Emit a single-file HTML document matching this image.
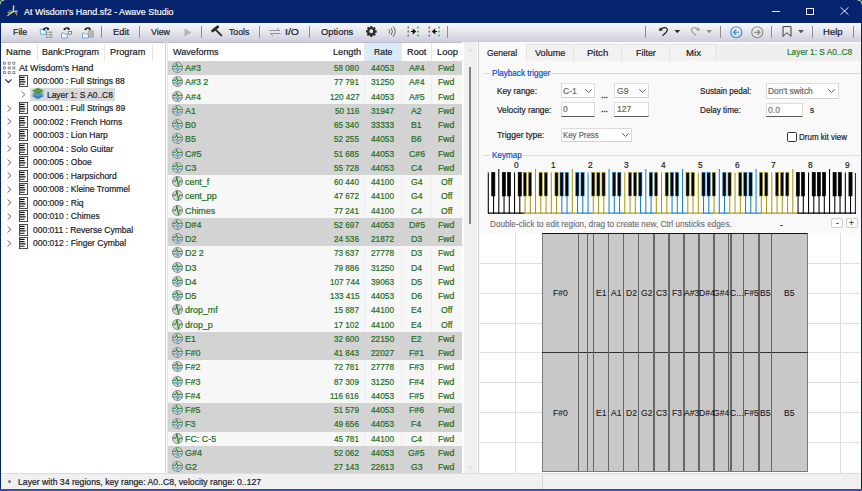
<!DOCTYPE html><html><head><meta charset="utf-8"><style>

*{box-sizing:border-box}
html,body{margin:0;padding:0}
body{width:862px;height:491px;overflow:hidden;position:relative;background:#fff;font-family:"Liberation Sans", sans-serif;font-size:9px}
.a{position:absolute}
.t{position:absolute;white-space:pre}
svg{position:absolute;overflow:visible}

</style></head><body>
<div class="a" style="left:0;top:0;width:862px;height:491px;background:#06236e"></div>
<div class="a" style="left:0;top:0;width:862px;height:23px;background:#06236e"></div>
<svg style="left:0;top:0" width="24" height="23" viewBox="0 0 24 23">
<ellipse cx="10.2" cy="11.2" rx="1.6" ry="1.2" fill="#3a6ae0"/><ellipse cx="16.3" cy="11" rx="1.6" ry="1.2" fill="#3a6ae0"/>
<path d="M13.6 6 L13.3 11.5" stroke="#f2d85a" stroke-width="1.5" stroke-linecap="round"/>
<path d="M7.4 15.8 L12.8 11.8" stroke="#f0d050" stroke-width="1.2"/>
<path d="M7.6 12.6 Q10.5 14.2 13 12 Q15 10.5 17.6 12.2" stroke="#e8d060" stroke-width="1" fill="none"/>
<path d="M15.6 12.3 L16.8 15.3" stroke="#e0c050" stroke-width="1"/>
</svg>
<svg style="left:0;top:0" width="6" height="6" viewBox="0 0 6 6"><path d="M0 0 H4.5 A4.5 4.5 0 0 0 0 4.5z" fill="#2b6a34"/><path d="M4.5 0 A4.5 4.5 0 0 0 0 4.5" stroke="#e8f0e8" stroke-width="0.9" fill="none"/></svg>
<svg style="left:856px;top:0" width="6" height="6" viewBox="0 0 6 6"><path d="M6 0 H1.5 A4.5 4.5 0 0 1 6 4.5z" fill="#2b6a34"/><path d="M1.5 0 A4.5 4.5 0 0 1 6 4.5" stroke="#e8f0e8" stroke-width="0.9" fill="none"/></svg>
<div class="t" style="left:23.50px;top:4.50px;height:14px;line-height:14px;font-size:9px;color:#ffffff;-webkit-text-stroke:0.15px #ffffff;transform:scaleX(0.9932);transform-origin:0 50%;">At Wisdom&#x27;s Hand.sf2 - Awave Studio</div>
<div class="a" style="left:772px;top:11px;width:8px;height:1px;background:#e8ecf8"></div>
<div class="a" style="left:806px;top:7.5px;width:8px;height:7.5px;border:1px solid #e8ecf8"></div>
<svg style="left:840px;top:7px" width="9" height="8" viewBox="0 0 9 8"><path d="M0.5 0.3 L8.5 7.7 M8.5 0.3 L0.5 7.7" stroke="#e8ecf8" stroke-width="1"/></svg>
<div class="a" style="left:0;top:489.4px;width:862px;height:2px;background:#34549f"></div>
<div class="a" style="left:1px;top:23px;width:860px;height:466.4px;background:#fff"></div>
<div class="a" style="left:1px;top:23px;width:860px;height:20.1px;background:linear-gradient(#ffffff,#f2f2f6 12%,#e2e2ea 55%,#cdcddc);border-bottom:1px solid #bcbcc6"></div>
<div class="t" style="left:13.40px;top:26.00px;height:12px;line-height:12px;font-size:9px;color:#1b1b2a;-webkit-text-stroke:0.2px #1b1b2a;transform:scaleX(0.9783);transform-origin:0 50%;">File</div>
<svg style="left:0;top:0" width="862" height="45" viewBox="0 0 862 45"><path d="M40.3 29.3 h2.2 l0.8 0.9 h2.8 v4 h-5.8z" fill="#f4f9fe" stroke="#52a3e6" stroke-width="0.9"/><path d="M43.6 29.6 q2.5 -3.2 5 -0.6" stroke="#111" stroke-width="1.2" fill="none"/><path d="M47.800000000000004 27.3 l1.6 2.4 l-2.4 0.2z" fill="#111"/><circle cx="43.9" cy="29.3" r="1" fill="#111"/><rect x="46.2" y="31.6" width="1.2" height="1.2" fill="#666"/><rect x="48.6" y="31.6" width="3.8" height="1.2" fill="#888"/><rect x="46.2" y="34.1" width="1.2" height="1.2" fill="#666"/><rect x="48.6" y="34.1" width="3.8" height="1.2" fill="#888"/><rect x="46.2" y="36.6" width="1.2" height="1.2" fill="#666"/><rect x="48.6" y="36.6" width="3.8" height="1.2" fill="#888"/><path d="M61.5 33.1 h2.2 l0.8 0.9 h2.8 v4 h-5.8z" fill="#f4f9fe" stroke="#52a3e6" stroke-width="0.9"/><path d="M64.2 29.6 q2.5 -3.2 5 -0.6" stroke="#111" stroke-width="1.2" fill="none"/><path d="M68.4 27.3 l1.6 2.4 l-2.4 0.2z" fill="#111"/><circle cx="64.5" cy="29.3" r="1" fill="#111"/><rect x="68.3" y="31.4" width="3.2" height="2.6" fill="#fff" stroke="#777" stroke-width="0.9"/><path d="M82.5 33.1 h2.2 l0.8 0.9 h2.8 v4 h-5.8z" fill="#f4f9fe" stroke="#52a3e6" stroke-width="0.9"/><path d="M85.2 29.6 q2.5 -3.2 5 -0.6" stroke="#111" stroke-width="1.2" fill="none"/><path d="M89.4 27.3 l1.6 2.4 l-2.4 0.2z" fill="#111"/><circle cx="85.5" cy="29.3" r="1" fill="#111"/><rect x="88.3" y="30.5" width="5.6" height="5.2" fill="#999"/><path d="M88.3 32.2 h5.6 M88.3 34 h5.6 M90.2 30.5 v5.2 M92.1 30.5 v5.2" stroke="#d8d8d8" stroke-width="0.5"/><rect x="88.3" y="36.5" width="1.2" height="1" fill="#666"/><rect x="90.3" y="36.5" width="3.6" height="1" fill="#888"/></svg>
<div class="a" style="left:101.0px;top:25.5px;width:1px;height:12px;background:#8c8c96"></div>
<div class="t" style="left:112.50px;top:26.00px;height:12px;line-height:12px;font-size:9px;color:#1b1b2a;-webkit-text-stroke:0.2px #1b1b2a;transform:scaleX(1.0377);transform-origin:0 50%;">Edit</div>
<div class="a" style="left:139.2px;top:25.5px;width:1px;height:12px;background:#8c8c96"></div>
<div class="t" style="left:150.50px;top:26.00px;height:12px;line-height:12px;font-size:9px;color:#1b1b2a;-webkit-text-stroke:0.2px #1b1b2a;transform:scaleX(0.9814);transform-origin:0 50%;">View</div>
<svg style="left:184px;top:28px" width="8" height="9" viewBox="0 0 8 9"><path d="M0.5 0.5 L7.5 4.5 L0.5 8.5z" fill="#b4b4bc"/></svg>
<div class="a" style="left:200.8px;top:25.5px;width:1px;height:12px;background:#8c8c96"></div>
<svg style="left:0;top:0" width="862" height="45" viewBox="0 0 862 45">
<path d="M212.6 30.9 L217.7 26.8" stroke="#2a2a2a" stroke-width="2.8" stroke-linecap="round"/>
<path d="M215.6 29.6 L221.3 35.4" stroke="#2a2a2a" stroke-width="1.9" stroke-linecap="round"/></svg>
<div class="t" style="left:228.80px;top:26.00px;height:12px;line-height:12px;font-size:9px;color:#1b1b2a;-webkit-text-stroke:0.2px #1b1b2a;transform:scaleX(0.9659);transform-origin:0 50%;">Tools</div>
<div class="a" style="left:259.0px;top:25.5px;width:1px;height:12px;background:#8c8c96"></div>
<svg style="left:269px;top:27px" width="12" height="10" viewBox="0 0 12 10">
<path d="M0.5 3.5 H10.5 L8 1 M11.5 6.5 H1.5 L4 9" stroke="#888" stroke-width="0.9" fill="none"/></svg>
<div class="t" style="left:285.40px;top:26.00px;height:12px;line-height:12px;font-size:9px;color:#1b1b2a;-webkit-text-stroke:0.2px #1b1b2a;transform:scaleX(1.1568);transform-origin:0 50%;">I/O</div>
<div class="a" style="left:308.9px;top:25.5px;width:1px;height:12px;background:#8c8c96"></div>
<div class="t" style="left:320.80px;top:26.00px;height:12px;line-height:12px;font-size:9px;color:#1b1b2a;-webkit-text-stroke:0.2px #1b1b2a;transform:scaleX(1.0409);transform-origin:0 50%;">Options</div>
<svg style="left:365.5px;top:26.3px" width="10.5" height="10.5" viewBox="0 0 20 20">
<path fill="#2d2d2d" d="M8.3 0h3.4l.5 2.6 1.8.8 2.2-1.5 2.4 2.4-1.5 2.2.8 1.8 2.6.5v3.4l-2.6.5-.8 1.8 1.5 2.2-2.4 2.4-2.2-1.5-1.8.8-.5 2.6H8.3l-.5-2.6-1.8-.8-2.2 1.5-2.4-2.4 1.5-2.2-.8-1.8L0 11.7V8.3l2.6-.5.8-1.8-1.5-2.2 2.4-2.4 2.2 1.5 1.8-.8z M10 6.3a3.7 3.7 0 1 0 0 7.4a3.7 3.7 0 1 0 0-7.4z"/></svg>
<svg style="left:388px;top:26px" width="8" height="11" viewBox="0 0 8 11">
<path d="M1 3.5 q1.5 2 0 4" stroke="#555" stroke-width="0.9" fill="none"/><path d="M3 2 q3 3.5 0 7" stroke="#555" stroke-width="0.9" fill="none"/><path d="M5 0.5 q4.5 5 0 10" stroke="#555" stroke-width="0.9" fill="none"/></svg>
<svg style="left:406.8px;top:26px" width="13" height="11" viewBox="0 0 13 11">
<rect x="0.5" y="0.5" width="1.6" height="2" fill="#777"/><rect x="0.5" y="4.5" width="1.6" height="2" fill="#777"/><rect x="0.5" y="8.5" width="1.6" height="2" fill="#777"/>
<circle cx="11" cy="1.5" r="1" fill="#5aa85a"/><circle cx="11" cy="5.5" r="1" fill="#5aa85a"/><circle cx="11" cy="9.5" r="1" fill="#5aa85a"/>
<path d="M4 5.5 h4 M6.3 3.8 L8.3 5.5 L6.3 7.2z" stroke="#111" stroke-width="1.2" fill="#111"/></svg>
<svg style="left:427.7px;top:26px" width="13" height="11" viewBox="0 0 13 11">
<rect x="0.5" y="0.5" width="1.6" height="2" fill="#777"/><rect x="0.5" y="4.5" width="1.6" height="2" fill="#777"/><rect x="0.5" y="8.5" width="1.6" height="2" fill="#777"/>
<circle cx="11" cy="1.5" r="1" fill="#5aa85a"/><circle cx="11" cy="5.5" r="1" fill="#5aa85a"/><circle cx="11" cy="9.5" r="1" fill="#5aa85a"/>
<path d="M5 5.5 h4 M6.7 3.8 L4.7 5.5 L6.7 7.2z" stroke="#111" stroke-width="1.2" fill="#111"/></svg>
<div class="a" style="left:447.0px;top:25.5px;width:1px;height:12px;background:#8c8c96"></div>
<div class="a" style="left:645.2px;top:25.5px;width:1px;height:12px;background:#8c8c96"></div>
<svg style="left:0;top:0" width="862" height="45" viewBox="0 0 862 45">
<path d="M660.6 30.2 C661.8 27.2 667.2 26.6 667.3 29.8 C667.4 32.2 664.4 34.2 662.4 35.6" stroke="#222" stroke-width="1.25" fill="none"/>
<path d="M658.8 31 L659.9 27.4 L663 30.2z" fill="#222"/>
<path d="M674.4 30 H680.2 L677.3 33.2z" fill="#2a2a2a"/>
<path d="M698.2 30.2 C697 27.2 691.6 26.6 691.5 29.8 C691.4 32.2 694.4 34.2 696.4 35.6" stroke="#a4a4a4" stroke-width="1.25" fill="none"/>
<path d="M700 31 L698.9 27.4 L695.8 30.2z" fill="#a4a4a4"/>
<path d="M706.2 30 H712 L709.1 33.2z" fill="#8c8c8c"/>
</svg>
<div class="a" style="left:719.8px;top:25.5px;width:1px;height:12px;background:#8c8c96"></div>
<svg style="left:729.5px;top:25.8px" width="12.5" height="12.5" viewBox="0 0 12 12">
<circle cx="6" cy="6" r="5.3" stroke="#3a8fdc" stroke-width="1.1" fill="none"/><path d="M8.8 6 H3.5 M5.8 3.6 L3.3 6 L5.8 8.4" stroke="#3a8fdc" stroke-width="1.1" fill="none"/></svg>
<svg style="left:750.5px;top:25.8px" width="12.5" height="12.5" viewBox="0 0 12 12">
<circle cx="6" cy="6" r="5.3" stroke="#8a8a8a" stroke-width="1.1" fill="none"/><path d="M3.2 6 H8.5 M6.2 3.6 L8.7 6 L6.2 8.4" stroke="#8a8a8a" stroke-width="1.2" fill="none"/></svg>
<div class="a" style="left:770.8px;top:25.5px;width:1px;height:12px;background:#8c8c96"></div>
<svg style="left:782px;top:26px" width="10" height="11" viewBox="0 0 10 11">
<path d="M1 0.6 H9 V10.4 L5 6.8 L1 10.4z" stroke="#3c3c3c" stroke-width="1" fill="none"/></svg>
<svg style="left:798.2px;top:30px" width="7" height="4" viewBox="0 0 7 4"><path d="M0 0 H6 L3 3.2z" fill="#555"/></svg>
<div class="a" style="left:811.5px;top:25.5px;width:1px;height:12px;background:#8c8c96"></div>
<div class="t" style="left:823.40px;top:26.00px;height:12px;line-height:12px;font-size:9px;color:#1b1b2a;-webkit-text-stroke:0.2px #1b1b2a;transform:scaleX(1.0586);transform-origin:0 50%;">Help</div>
<div class="a" style="left:853.3px;top:25.5px;width:1px;height:12px;background:#8c8c96"></div>
<div class="t" style="left:5.50px;top:46.00px;height:12px;line-height:12px;font-size:9px;color:#1b1b2a;-webkit-text-stroke:0.2px #1b1b2a;transform:scaleX(1.0368);transform-origin:0 50%;">Name</div>
<div class="t" style="left:42.40px;top:46.00px;height:12px;line-height:12px;font-size:9px;color:#1b1b2a;-webkit-text-stroke:0.2px #1b1b2a;transform:scaleX(0.9908);transform-origin:0 50%;">Bank:Program</div>
<div class="t" style="left:109.50px;top:46.00px;height:12px;line-height:12px;font-size:9px;color:#1b1b2a;-webkit-text-stroke:0.2px #1b1b2a;transform:scaleX(1.0227);transform-origin:0 50%;">Program</div>
<div class="a" style="left:37.0px;top:43.5px;width:1px;height:17px;background:#e6e6e6"></div>
<div class="a" style="left:104.0px;top:43.5px;width:1px;height:17px;background:#e6e6e6"></div>
<div class="a" style="left:151.9px;top:43.5px;width:1px;height:17px;background:#e6e6e6"></div>
<div class="a" style="left:165px;top:42px;width:1px;height:431px;background:#d2d2d2"></div>
<div class="a" style="left:167px;top:42px;width:1px;height:431px;background:#e4e4e4"></div>
<svg style="left:0;top:0" width="20" height="80" viewBox="0 0 20 80"><rect x="3.5" y="62.2" width="2" height="2" fill="#fff" stroke="#777" stroke-width="0.8"/><rect x="3.5" y="66.9" width="2" height="2" fill="#fff" stroke="#777" stroke-width="0.8"/><rect x="3.5" y="71.6" width="2" height="2" fill="#fff" stroke="#777" stroke-width="0.8"/><rect x="8.2" y="62.2" width="2" height="2" fill="#fff" stroke="#777" stroke-width="0.8"/><rect x="8.2" y="66.9" width="2" height="2" fill="#fff" stroke="#777" stroke-width="0.8"/><rect x="8.2" y="71.6" width="2" height="2" fill="#fff" stroke="#777" stroke-width="0.8"/><rect x="12.9" y="62.2" width="2" height="2" fill="#fff" stroke="#777" stroke-width="0.8"/><rect x="12.9" y="66.9" width="2" height="2" fill="#fff" stroke="#777" stroke-width="0.8"/><rect x="12.9" y="71.6" width="2" height="2" fill="#fff" stroke="#777" stroke-width="0.8"/></svg>
<div class="t" style="left:19.10px;top:61.75px;height:12px;line-height:12px;font-size:9px;color:#1b1b2a;-webkit-text-stroke:0.2px #1b1b2a;transform:scaleX(1.0088);transform-origin:0 50%;">At Wisdom&#x27;s Hand</div>
<svg style="left:5.3px;top:79.25px" width="7" height="4" viewBox="0 0 7 4"><path d="M0.4 0.4 L3.5 3.4 L6.6 0.4" stroke="#222" stroke-width="1.1" fill="none"/></svg>
<svg style="left:19.2px;top:75.45px" width="9" height="12" viewBox="0 0 9 12">
<rect x="0.45" y="0.45" width="8.1" height="11.1" fill="#fff" stroke="#3a3a3a" stroke-width="0.9"/>
<path d="M1 2.3 h4.6 M1 4.6 h4.6 M1 6.9 h5.6 M1 9.2 h4.6" stroke="#111" stroke-width="1.15"/></svg>
<div class="t" style="left:33.10px;top:75.25px;height:12px;line-height:12px;font-size:9px;color:#1b1b2a;-webkit-text-stroke:0.2px #1b1b2a;transform:scaleX(0.9389);transform-origin:0 50%;">000:000 : Full Strings 88</div>
<div class="a" style="left:30px;top:88.25px;width:84.5px;height:13px;background:#d9d9d9"></div>
<svg style="left:20.9px;top:91.45px" width="5" height="7" viewBox="0 0 5 7"><path d="M0.6 0.5 L4 3.5 L0.6 6.5" stroke="#777" stroke-width="1" fill="none"/></svg>
<svg style="left:32px;top:88.45px" width="12" height="11" viewBox="0 0 12 11">
<path d="M6 5.2 L11.5 8 L6 11 L0.5 8z" fill="#3d82c9" stroke="#2f6fb5" stroke-width="0.5"/>
<path d="M6 3 L11.5 5.8 L6 8.8 L0.5 5.8z" fill="#55a0b8" stroke="#3f8aa5" stroke-width="0.5"/>
<path d="M6 0 L11.5 2.8 L6 5.8 L0.5 2.8z" fill="#5a9a50" stroke="#3f7f3f" stroke-width="0.5"/></svg>
<div class="t" style="left:47.30px;top:88.75px;height:12px;line-height:12px;font-size:9px;color:#1b1b2a;-webkit-text-stroke:0.2px #1b1b2a;transform:scaleX(0.9327);transform-origin:0 50%;">Layer 1: S A0..C8</div>
<svg style="left:6.5px;top:104.95px" width="5" height="7" viewBox="0 0 5 7"><path d="M0.6 0.5 L4 3.5 L0.6 6.5" stroke="#666" stroke-width="1" fill="none"/></svg>
<svg style="left:19.2px;top:102.45px" width="9" height="12" viewBox="0 0 9 12">
<rect x="0.45" y="0.45" width="8.1" height="11.1" fill="#fff" stroke="#3a3a3a" stroke-width="0.9"/>
<path d="M1 2.3 h4.6 M1 4.6 h4.6 M1 6.9 h5.6 M1 9.2 h4.6" stroke="#111" stroke-width="1.15"/></svg>
<div class="t" style="left:33.10px;top:102.25px;height:12px;line-height:12px;font-size:9px;color:#1b1b2a;-webkit-text-stroke:0.2px #1b1b2a;transform:scaleX(0.9450);transform-origin:0 50%;">000:001 : Full Strings 89</div>
<svg style="left:6.5px;top:118.45px" width="5" height="7" viewBox="0 0 5 7"><path d="M0.6 0.5 L4 3.5 L0.6 6.5" stroke="#666" stroke-width="1" fill="none"/></svg>
<svg style="left:19.2px;top:115.95px" width="9" height="12" viewBox="0 0 9 12">
<rect x="0.45" y="0.45" width="8.1" height="11.1" fill="#fff" stroke="#3a3a3a" stroke-width="0.9"/>
<path d="M1 2.3 h4.6 M1 4.6 h4.6 M1 6.9 h5.6 M1 9.2 h4.6" stroke="#111" stroke-width="1.15"/></svg>
<div class="t" style="left:33.10px;top:115.75px;height:12px;line-height:12px;font-size:9px;color:#1b1b2a;-webkit-text-stroke:0.2px #1b1b2a;transform:scaleX(0.9450);transform-origin:0 50%;">000:002 : French Horns</div>
<svg style="left:6.5px;top:131.95px" width="5" height="7" viewBox="0 0 5 7"><path d="M0.6 0.5 L4 3.5 L0.6 6.5" stroke="#666" stroke-width="1" fill="none"/></svg>
<svg style="left:19.2px;top:129.45px" width="9" height="12" viewBox="0 0 9 12">
<rect x="0.45" y="0.45" width="8.1" height="11.1" fill="#fff" stroke="#3a3a3a" stroke-width="0.9"/>
<path d="M1 2.3 h4.6 M1 4.6 h4.6 M1 6.9 h5.6 M1 9.2 h4.6" stroke="#111" stroke-width="1.15"/></svg>
<div class="t" style="left:33.10px;top:129.25px;height:12px;line-height:12px;font-size:9px;color:#1b1b2a;-webkit-text-stroke:0.2px #1b1b2a;transform:scaleX(0.9450);transform-origin:0 50%;">000:003 : Lion Harp</div>
<svg style="left:6.5px;top:145.45px" width="5" height="7" viewBox="0 0 5 7"><path d="M0.6 0.5 L4 3.5 L0.6 6.5" stroke="#666" stroke-width="1" fill="none"/></svg>
<svg style="left:19.2px;top:142.95px" width="9" height="12" viewBox="0 0 9 12">
<rect x="0.45" y="0.45" width="8.1" height="11.1" fill="#fff" stroke="#3a3a3a" stroke-width="0.9"/>
<path d="M1 2.3 h4.6 M1 4.6 h4.6 M1 6.9 h5.6 M1 9.2 h4.6" stroke="#111" stroke-width="1.15"/></svg>
<div class="t" style="left:33.10px;top:142.75px;height:12px;line-height:12px;font-size:9px;color:#1b1b2a;-webkit-text-stroke:0.2px #1b1b2a;transform:scaleX(0.9450);transform-origin:0 50%;">000:004 : Solo Guitar</div>
<svg style="left:6.5px;top:158.95px" width="5" height="7" viewBox="0 0 5 7"><path d="M0.6 0.5 L4 3.5 L0.6 6.5" stroke="#666" stroke-width="1" fill="none"/></svg>
<svg style="left:19.2px;top:156.45px" width="9" height="12" viewBox="0 0 9 12">
<rect x="0.45" y="0.45" width="8.1" height="11.1" fill="#fff" stroke="#3a3a3a" stroke-width="0.9"/>
<path d="M1 2.3 h4.6 M1 4.6 h4.6 M1 6.9 h5.6 M1 9.2 h4.6" stroke="#111" stroke-width="1.15"/></svg>
<div class="t" style="left:33.10px;top:156.25px;height:12px;line-height:12px;font-size:9px;color:#1b1b2a;-webkit-text-stroke:0.2px #1b1b2a;transform:scaleX(0.9450);transform-origin:0 50%;">000:005 : Oboe</div>
<svg style="left:6.5px;top:172.45px" width="5" height="7" viewBox="0 0 5 7"><path d="M0.6 0.5 L4 3.5 L0.6 6.5" stroke="#666" stroke-width="1" fill="none"/></svg>
<svg style="left:19.2px;top:169.95px" width="9" height="12" viewBox="0 0 9 12">
<rect x="0.45" y="0.45" width="8.1" height="11.1" fill="#fff" stroke="#3a3a3a" stroke-width="0.9"/>
<path d="M1 2.3 h4.6 M1 4.6 h4.6 M1 6.9 h5.6 M1 9.2 h4.6" stroke="#111" stroke-width="1.15"/></svg>
<div class="t" style="left:33.10px;top:169.75px;height:12px;line-height:12px;font-size:9px;color:#1b1b2a;-webkit-text-stroke:0.2px #1b1b2a;transform:scaleX(0.9450);transform-origin:0 50%;">000:006 : Harpsichord</div>
<svg style="left:6.5px;top:185.95px" width="5" height="7" viewBox="0 0 5 7"><path d="M0.6 0.5 L4 3.5 L0.6 6.5" stroke="#666" stroke-width="1" fill="none"/></svg>
<svg style="left:19.2px;top:183.45px" width="9" height="12" viewBox="0 0 9 12">
<rect x="0.45" y="0.45" width="8.1" height="11.1" fill="#fff" stroke="#3a3a3a" stroke-width="0.9"/>
<path d="M1 2.3 h4.6 M1 4.6 h4.6 M1 6.9 h5.6 M1 9.2 h4.6" stroke="#111" stroke-width="1.15"/></svg>
<div class="t" style="left:33.10px;top:183.25px;height:12px;line-height:12px;font-size:9px;color:#1b1b2a;-webkit-text-stroke:0.2px #1b1b2a;transform:scaleX(0.9450);transform-origin:0 50%;">000:008 : Kleine Trommel</div>
<svg style="left:6.5px;top:199.45px" width="5" height="7" viewBox="0 0 5 7"><path d="M0.6 0.5 L4 3.5 L0.6 6.5" stroke="#666" stroke-width="1" fill="none"/></svg>
<svg style="left:19.2px;top:196.95px" width="9" height="12" viewBox="0 0 9 12">
<rect x="0.45" y="0.45" width="8.1" height="11.1" fill="#fff" stroke="#3a3a3a" stroke-width="0.9"/>
<path d="M1 2.3 h4.6 M1 4.6 h4.6 M1 6.9 h5.6 M1 9.2 h4.6" stroke="#111" stroke-width="1.15"/></svg>
<div class="t" style="left:33.10px;top:196.75px;height:12px;line-height:12px;font-size:9px;color:#1b1b2a;-webkit-text-stroke:0.2px #1b1b2a;transform:scaleX(0.9450);transform-origin:0 50%;">000:009 : Riq</div>
<svg style="left:6.5px;top:212.95px" width="5" height="7" viewBox="0 0 5 7"><path d="M0.6 0.5 L4 3.5 L0.6 6.5" stroke="#666" stroke-width="1" fill="none"/></svg>
<svg style="left:19.2px;top:210.45px" width="9" height="12" viewBox="0 0 9 12">
<rect x="0.45" y="0.45" width="8.1" height="11.1" fill="#fff" stroke="#3a3a3a" stroke-width="0.9"/>
<path d="M1 2.3 h4.6 M1 4.6 h4.6 M1 6.9 h5.6 M1 9.2 h4.6" stroke="#111" stroke-width="1.15"/></svg>
<div class="t" style="left:33.10px;top:210.25px;height:12px;line-height:12px;font-size:9px;color:#1b1b2a;-webkit-text-stroke:0.2px #1b1b2a;transform:scaleX(0.9450);transform-origin:0 50%;">000:010 : Chimes</div>
<svg style="left:6.5px;top:226.45px" width="5" height="7" viewBox="0 0 5 7"><path d="M0.6 0.5 L4 3.5 L0.6 6.5" stroke="#666" stroke-width="1" fill="none"/></svg>
<svg style="left:19.2px;top:223.95px" width="9" height="12" viewBox="0 0 9 12">
<rect x="0.45" y="0.45" width="8.1" height="11.1" fill="#fff" stroke="#3a3a3a" stroke-width="0.9"/>
<path d="M1 2.3 h4.6 M1 4.6 h4.6 M1 6.9 h5.6 M1 9.2 h4.6" stroke="#111" stroke-width="1.15"/></svg>
<div class="t" style="left:33.10px;top:223.75px;height:12px;line-height:12px;font-size:9px;color:#1b1b2a;-webkit-text-stroke:0.2px #1b1b2a;transform:scaleX(0.9450);transform-origin:0 50%;">000:011 : Reverse Cymbal</div>
<svg style="left:6.5px;top:239.95px" width="5" height="7" viewBox="0 0 5 7"><path d="M0.6 0.5 L4 3.5 L0.6 6.5" stroke="#666" stroke-width="1" fill="none"/></svg>
<svg style="left:19.2px;top:237.45px" width="9" height="12" viewBox="0 0 9 12">
<rect x="0.45" y="0.45" width="8.1" height="11.1" fill="#fff" stroke="#3a3a3a" stroke-width="0.9"/>
<path d="M1 2.3 h4.6 M1 4.6 h4.6 M1 6.9 h5.6 M1 9.2 h4.6" stroke="#111" stroke-width="1.15"/></svg>
<div class="t" style="left:33.10px;top:237.25px;height:12px;line-height:12px;font-size:9px;color:#1b1b2a;-webkit-text-stroke:0.2px #1b1b2a;transform:scaleX(0.9450);transform-origin:0 50%;">000:012 : Finger Cymbal</div>
<div class="t" style="left:172.60px;top:46.00px;height:12px;line-height:12px;font-size:9px;color:#1b1b2a;-webkit-text-stroke:0.2px #1b1b2a;transform:scaleX(1.0095);transform-origin:0 50%;">Waveforms</div>
<div class="a" style="left:364.2px;top:42.8px;width:37.6px;height:18.3px;background:#d9ebf9"></div>
<div class="t" style="left:332.60px;top:46.00px;height:12px;line-height:12px;font-size:9px;color:#1b1b2a;-webkit-text-stroke:0.2px #1b1b2a;transform:scaleX(1.0207);transform-origin:0 50%;">Length</div>
<div class="t" style="left:374.40px;top:46.00px;height:12px;line-height:12px;font-size:9px;color:#1b1b2a;-webkit-text-stroke:0.2px #1b1b2a;transform:scaleX(0.9676);transform-origin:0 50%;">Rate</div>
<div class="t" style="left:407.20px;top:46.00px;height:12px;line-height:12px;font-size:9px;color:#1b1b2a;-webkit-text-stroke:0.2px #1b1b2a;transform:scaleX(1.0202);transform-origin:0 50%;">Root</div>
<div class="t" style="left:436.90px;top:46.00px;height:12px;line-height:12px;font-size:9px;color:#1b1b2a;-webkit-text-stroke:0.2px #1b1b2a;transform:scaleX(1.0434);transform-origin:0 50%;">Loop</div>
<div class="a" style="left:363.7px;top:43px;width:1px;height:17.5px;background:#e8e8e8"></div>
<div class="a" style="left:401.2px;top:43px;width:1px;height:17.5px;background:#e8e8e8"></div>
<div class="a" style="left:430.9px;top:43px;width:1px;height:17.5px;background:#e8e8e8"></div>
<div class="a" style="left:168px;top:61px;width:294px;height:412px;overflow:hidden">
<div class="a" style="left:0;top:0.00px;width:294px;height:14.25px;background:#d3d3d3"></div>
<div class="a" style="left:0;top:14.25px;width:294px;height:14.25px;background:#f7f7f7"></div>
<div class="a" style="left:195.70px;top:14.25px;width:1px;height:14.25px;background:#e6eef6"></div>
<div class="a" style="left:233.20px;top:14.25px;width:1px;height:14.25px;background:#e6eef6"></div>
<div class="a" style="left:262.90px;top:14.25px;width:1px;height:14.25px;background:#e6eef6"></div>
<div class="a" style="left:0;top:28.50px;width:294px;height:14.25px;background:#f7f7f7"></div>
<div class="a" style="left:195.70px;top:28.50px;width:1px;height:14.25px;background:#e6eef6"></div>
<div class="a" style="left:233.20px;top:28.50px;width:1px;height:14.25px;background:#e6eef6"></div>
<div class="a" style="left:262.90px;top:28.50px;width:1px;height:14.25px;background:#e6eef6"></div>
<div class="a" style="left:0;top:42.75px;width:294px;height:14.25px;background:#d3d3d3"></div>
<div class="a" style="left:0;top:57.00px;width:294px;height:14.25px;background:#d3d3d3"></div>
<div class="a" style="left:0;top:71.25px;width:294px;height:14.25px;background:#d3d3d3"></div>
<div class="a" style="left:0;top:85.50px;width:294px;height:14.25px;background:#d3d3d3"></div>
<div class="a" style="left:0;top:99.75px;width:294px;height:14.25px;background:#d3d3d3"></div>
<div class="a" style="left:0;top:114.00px;width:294px;height:14.25px;background:#f7f7f7"></div>
<div class="a" style="left:195.70px;top:114.00px;width:1px;height:14.25px;background:#e6eef6"></div>
<div class="a" style="left:233.20px;top:114.00px;width:1px;height:14.25px;background:#e6eef6"></div>
<div class="a" style="left:262.90px;top:114.00px;width:1px;height:14.25px;background:#e6eef6"></div>
<div class="a" style="left:0;top:128.25px;width:294px;height:14.25px;background:#f7f7f7"></div>
<div class="a" style="left:195.70px;top:128.25px;width:1px;height:14.25px;background:#e6eef6"></div>
<div class="a" style="left:233.20px;top:128.25px;width:1px;height:14.25px;background:#e6eef6"></div>
<div class="a" style="left:262.90px;top:128.25px;width:1px;height:14.25px;background:#e6eef6"></div>
<div class="a" style="left:0;top:142.50px;width:294px;height:14.25px;background:#f7f7f7"></div>
<div class="a" style="left:195.70px;top:142.50px;width:1px;height:14.25px;background:#e6eef6"></div>
<div class="a" style="left:233.20px;top:142.50px;width:1px;height:14.25px;background:#e6eef6"></div>
<div class="a" style="left:262.90px;top:142.50px;width:1px;height:14.25px;background:#e6eef6"></div>
<div class="a" style="left:0;top:156.75px;width:294px;height:14.25px;background:#d3d3d3"></div>
<div class="a" style="left:0;top:171.00px;width:294px;height:14.25px;background:#d3d3d3"></div>
<div class="a" style="left:0;top:185.25px;width:294px;height:14.25px;background:#f7f7f7"></div>
<div class="a" style="left:195.70px;top:185.25px;width:1px;height:14.25px;background:#e6eef6"></div>
<div class="a" style="left:233.20px;top:185.25px;width:1px;height:14.25px;background:#e6eef6"></div>
<div class="a" style="left:262.90px;top:185.25px;width:1px;height:14.25px;background:#e6eef6"></div>
<div class="a" style="left:0;top:199.50px;width:294px;height:14.25px;background:#f7f7f7"></div>
<div class="a" style="left:195.70px;top:199.50px;width:1px;height:14.25px;background:#e6eef6"></div>
<div class="a" style="left:233.20px;top:199.50px;width:1px;height:14.25px;background:#e6eef6"></div>
<div class="a" style="left:262.90px;top:199.50px;width:1px;height:14.25px;background:#e6eef6"></div>
<div class="a" style="left:0;top:213.75px;width:294px;height:14.25px;background:#f7f7f7"></div>
<div class="a" style="left:195.70px;top:213.75px;width:1px;height:14.25px;background:#e6eef6"></div>
<div class="a" style="left:233.20px;top:213.75px;width:1px;height:14.25px;background:#e6eef6"></div>
<div class="a" style="left:262.90px;top:213.75px;width:1px;height:14.25px;background:#e6eef6"></div>
<div class="a" style="left:0;top:228.00px;width:294px;height:14.25px;background:#f7f7f7"></div>
<div class="a" style="left:195.70px;top:228.00px;width:1px;height:14.25px;background:#e6eef6"></div>
<div class="a" style="left:233.20px;top:228.00px;width:1px;height:14.25px;background:#e6eef6"></div>
<div class="a" style="left:262.90px;top:228.00px;width:1px;height:14.25px;background:#e6eef6"></div>
<div class="a" style="left:0;top:242.25px;width:294px;height:14.25px;background:#f7f7f7"></div>
<div class="a" style="left:195.70px;top:242.25px;width:1px;height:14.25px;background:#e6eef6"></div>
<div class="a" style="left:233.20px;top:242.25px;width:1px;height:14.25px;background:#e6eef6"></div>
<div class="a" style="left:262.90px;top:242.25px;width:1px;height:14.25px;background:#e6eef6"></div>
<div class="a" style="left:0;top:256.50px;width:294px;height:14.25px;background:#f7f7f7"></div>
<div class="a" style="left:195.70px;top:256.50px;width:1px;height:14.25px;background:#e6eef6"></div>
<div class="a" style="left:233.20px;top:256.50px;width:1px;height:14.25px;background:#e6eef6"></div>
<div class="a" style="left:262.90px;top:256.50px;width:1px;height:14.25px;background:#e6eef6"></div>
<div class="a" style="left:0;top:270.75px;width:294px;height:14.25px;background:#d3d3d3"></div>
<div class="a" style="left:0;top:285.00px;width:294px;height:14.25px;background:#d3d3d3"></div>
<div class="a" style="left:0;top:299.25px;width:294px;height:14.25px;background:#f7f7f7"></div>
<div class="a" style="left:195.70px;top:299.25px;width:1px;height:14.25px;background:#e6eef6"></div>
<div class="a" style="left:233.20px;top:299.25px;width:1px;height:14.25px;background:#e6eef6"></div>
<div class="a" style="left:262.90px;top:299.25px;width:1px;height:14.25px;background:#e6eef6"></div>
<div class="a" style="left:0;top:313.50px;width:294px;height:14.25px;background:#f7f7f7"></div>
<div class="a" style="left:195.70px;top:313.50px;width:1px;height:14.25px;background:#e6eef6"></div>
<div class="a" style="left:233.20px;top:313.50px;width:1px;height:14.25px;background:#e6eef6"></div>
<div class="a" style="left:262.90px;top:313.50px;width:1px;height:14.25px;background:#e6eef6"></div>
<div class="a" style="left:0;top:327.75px;width:294px;height:14.25px;background:#f7f7f7"></div>
<div class="a" style="left:195.70px;top:327.75px;width:1px;height:14.25px;background:#e6eef6"></div>
<div class="a" style="left:233.20px;top:327.75px;width:1px;height:14.25px;background:#e6eef6"></div>
<div class="a" style="left:262.90px;top:327.75px;width:1px;height:14.25px;background:#e6eef6"></div>
<div class="a" style="left:0;top:342.00px;width:294px;height:14.25px;background:#d3d3d3"></div>
<div class="a" style="left:0;top:356.25px;width:294px;height:14.25px;background:#d3d3d3"></div>
<div class="a" style="left:0;top:370.50px;width:294px;height:14.25px;background:#f7f7f7"></div>
<div class="a" style="left:195.70px;top:370.50px;width:1px;height:14.25px;background:#e6eef6"></div>
<div class="a" style="left:233.20px;top:370.50px;width:1px;height:14.25px;background:#e6eef6"></div>
<div class="a" style="left:262.90px;top:370.50px;width:1px;height:14.25px;background:#e6eef6"></div>
<div class="a" style="left:0;top:384.75px;width:294px;height:14.25px;background:#d3d3d3"></div>
<div class="a" style="left:0;top:399.00px;width:294px;height:14.25px;background:#d3d3d3"></div>
</div>
<svg style="left:171.5px;top:62.02px" width="11" height="11" viewBox="0 0 11 11">
<circle cx="5.5" cy="5.5" r="5.05" fill="#d6d6d6" stroke="#7c7c7c" stroke-width="0.85"/>
<path d="M0.6 4.3 H3.7 L4.7 1.6 L5.8 5.6 L6.5 4.3 H10.4" stroke="#228a22" stroke-width="1" fill="none"/>
<path d="M0.6 6.9 H3.7 L4.6 6.1 L5.6 9.4 L6.6 6.9 H10.4" stroke="#3a8db5" stroke-width="1" fill="none"/></svg>
<div class="t" style="left:185.00px;top:62.12px;height:12px;line-height:12px;font-size:9px;color:#1c6e1c;-webkit-text-stroke:0.2px #1c6e1c;transform:scaleX(0.9900);transform-origin:0 50%;">A#3</div>
<div class="t" style="left:334.08px;top:62.12px;height:12px;line-height:12px;font-size:9px;color:#1c6e1c;-webkit-text-stroke:0.2px #1c6e1c;transform:scaleX(0.9050);transform-origin:0 50%;">58 080</div>
<div class="t" style="left:371.44px;top:62.12px;height:12px;line-height:12px;font-size:9px;color:#1c6e1c;-webkit-text-stroke:0.2px #1c6e1c;transform:scaleX(0.9200);transform-origin:0 50%;">44053</div>
<div class="t" style="left:408.78px;top:62.12px;height:12px;line-height:12px;font-size:9px;color:#1c6e1c;-webkit-text-stroke:0.2px #1c6e1c;transform:scaleX(0.9700);transform-origin:0 50%;">A#4</div>
<div class="t" style="left:438.44px;top:62.12px;height:12px;line-height:12px;font-size:9px;color:#1c6e1c;-webkit-text-stroke:0.2px #1c6e1c;transform:scaleX(0.9650);transform-origin:0 50%;">Fwd</div>
<svg style="left:171.5px;top:76.28px" width="11" height="11" viewBox="0 0 11 11">
<circle cx="5.5" cy="5.5" r="5.05" fill="#d6d6d6" stroke="#7c7c7c" stroke-width="0.85"/>
<path d="M0.6 4.3 H3.7 L4.7 1.6 L5.8 5.6 L6.5 4.3 H10.4" stroke="#228a22" stroke-width="1" fill="none"/>
<path d="M0.6 6.9 H3.7 L4.6 6.1 L5.6 9.4 L6.6 6.9 H10.4" stroke="#3a8db5" stroke-width="1" fill="none"/></svg>
<div class="t" style="left:185.00px;top:76.38px;height:12px;line-height:12px;font-size:9px;color:#1c6e1c;-webkit-text-stroke:0.2px #1c6e1c;transform:scaleX(0.9900);transform-origin:0 50%;">A#3 2</div>
<div class="t" style="left:334.08px;top:76.38px;height:12px;line-height:12px;font-size:9px;color:#1c6e1c;-webkit-text-stroke:0.2px #1c6e1c;transform:scaleX(0.9050);transform-origin:0 50%;">77 791</div>
<div class="t" style="left:371.44px;top:76.38px;height:12px;line-height:12px;font-size:9px;color:#1c6e1c;-webkit-text-stroke:0.2px #1c6e1c;transform:scaleX(0.9200);transform-origin:0 50%;">31250</div>
<div class="t" style="left:408.78px;top:76.38px;height:12px;line-height:12px;font-size:9px;color:#1c6e1c;-webkit-text-stroke:0.2px #1c6e1c;transform:scaleX(0.9700);transform-origin:0 50%;">A#4</div>
<div class="t" style="left:438.44px;top:76.38px;height:12px;line-height:12px;font-size:9px;color:#1c6e1c;-webkit-text-stroke:0.2px #1c6e1c;transform:scaleX(0.9650);transform-origin:0 50%;">Fwd</div>
<svg style="left:171.5px;top:90.53px" width="11" height="11" viewBox="0 0 11 11">
<circle cx="5.5" cy="5.5" r="5.05" fill="#d6d6d6" stroke="#7c7c7c" stroke-width="0.85"/>
<path d="M0.6 4.3 H3.7 L4.7 1.6 L5.8 5.6 L6.5 4.3 H10.4" stroke="#228a22" stroke-width="1" fill="none"/>
<path d="M0.6 6.9 H3.7 L4.6 6.1 L5.6 9.4 L6.6 6.9 H10.4" stroke="#3a8db5" stroke-width="1" fill="none"/></svg>
<div class="t" style="left:185.00px;top:90.62px;height:12px;line-height:12px;font-size:9px;color:#1c6e1c;-webkit-text-stroke:0.2px #1c6e1c;transform:scaleX(0.9900);transform-origin:0 50%;">A#4</div>
<div class="t" style="left:329.55px;top:90.62px;height:12px;line-height:12px;font-size:9px;color:#1c6e1c;-webkit-text-stroke:0.2px #1c6e1c;transform:scaleX(0.9050);transform-origin:0 50%;">120 427</div>
<div class="t" style="left:371.44px;top:90.62px;height:12px;line-height:12px;font-size:9px;color:#1c6e1c;-webkit-text-stroke:0.2px #1c6e1c;transform:scaleX(0.9200);transform-origin:0 50%;">44053</div>
<div class="t" style="left:408.78px;top:90.62px;height:12px;line-height:12px;font-size:9px;color:#1c6e1c;-webkit-text-stroke:0.2px #1c6e1c;transform:scaleX(0.9700);transform-origin:0 50%;">A#5</div>
<div class="t" style="left:438.44px;top:90.62px;height:12px;line-height:12px;font-size:9px;color:#1c6e1c;-webkit-text-stroke:0.2px #1c6e1c;transform:scaleX(0.9650);transform-origin:0 50%;">Fwd</div>
<svg style="left:171.5px;top:104.78px" width="11" height="11" viewBox="0 0 11 11">
<circle cx="5.5" cy="5.5" r="5.05" fill="#d6d6d6" stroke="#7c7c7c" stroke-width="0.85"/>
<path d="M0.6 4.3 H3.7 L4.7 1.6 L5.8 5.6 L6.5 4.3 H10.4" stroke="#228a22" stroke-width="1" fill="none"/>
<path d="M0.6 6.9 H3.7 L4.6 6.1 L5.6 9.4 L6.6 6.9 H10.4" stroke="#3a8db5" stroke-width="1" fill="none"/></svg>
<div class="t" style="left:185.00px;top:104.88px;height:12px;line-height:12px;font-size:9px;color:#1c6e1c;-webkit-text-stroke:0.2px #1c6e1c;transform:scaleX(0.9900);transform-origin:0 50%;">A1</div>
<div class="t" style="left:334.69px;top:104.88px;height:12px;line-height:12px;font-size:9px;color:#1c6e1c;-webkit-text-stroke:0.2px #1c6e1c;transform:scaleX(0.9050);transform-origin:0 50%;">50 116</div>
<div class="t" style="left:371.44px;top:104.88px;height:12px;line-height:12px;font-size:9px;color:#1c6e1c;-webkit-text-stroke:0.2px #1c6e1c;transform:scaleX(0.9200);transform-origin:0 50%;">31947</div>
<div class="t" style="left:411.21px;top:104.88px;height:12px;line-height:12px;font-size:9px;color:#1c6e1c;-webkit-text-stroke:0.2px #1c6e1c;transform:scaleX(0.9700);transform-origin:0 50%;">A2</div>
<div class="t" style="left:438.44px;top:104.88px;height:12px;line-height:12px;font-size:9px;color:#1c6e1c;-webkit-text-stroke:0.2px #1c6e1c;transform:scaleX(0.9650);transform-origin:0 50%;">Fwd</div>
<svg style="left:171.5px;top:119.03px" width="11" height="11" viewBox="0 0 11 11">
<circle cx="5.5" cy="5.5" r="5.05" fill="#d6d6d6" stroke="#7c7c7c" stroke-width="0.85"/>
<path d="M0.6 4.3 H3.7 L4.7 1.6 L5.8 5.6 L6.5 4.3 H10.4" stroke="#228a22" stroke-width="1" fill="none"/>
<path d="M0.6 6.9 H3.7 L4.6 6.1 L5.6 9.4 L6.6 6.9 H10.4" stroke="#3a8db5" stroke-width="1" fill="none"/></svg>
<div class="t" style="left:185.00px;top:119.12px;height:12px;line-height:12px;font-size:9px;color:#1c6e1c;-webkit-text-stroke:0.2px #1c6e1c;transform:scaleX(0.9900);transform-origin:0 50%;">B0</div>
<div class="t" style="left:334.08px;top:119.12px;height:12px;line-height:12px;font-size:9px;color:#1c6e1c;-webkit-text-stroke:0.2px #1c6e1c;transform:scaleX(0.9050);transform-origin:0 50%;">65 340</div>
<div class="t" style="left:371.44px;top:119.12px;height:12px;line-height:12px;font-size:9px;color:#1c6e1c;-webkit-text-stroke:0.2px #1c6e1c;transform:scaleX(0.9200);transform-origin:0 50%;">33333</div>
<div class="t" style="left:411.21px;top:119.12px;height:12px;line-height:12px;font-size:9px;color:#1c6e1c;-webkit-text-stroke:0.2px #1c6e1c;transform:scaleX(0.9700);transform-origin:0 50%;">B1</div>
<div class="t" style="left:438.44px;top:119.12px;height:12px;line-height:12px;font-size:9px;color:#1c6e1c;-webkit-text-stroke:0.2px #1c6e1c;transform:scaleX(0.9650);transform-origin:0 50%;">Fwd</div>
<svg style="left:171.5px;top:133.28px" width="11" height="11" viewBox="0 0 11 11">
<circle cx="5.5" cy="5.5" r="5.05" fill="#d6d6d6" stroke="#7c7c7c" stroke-width="0.85"/>
<path d="M0.6 4.3 H3.7 L4.7 1.6 L5.8 5.6 L6.5 4.3 H10.4" stroke="#228a22" stroke-width="1" fill="none"/>
<path d="M0.6 6.9 H3.7 L4.6 6.1 L5.6 9.4 L6.6 6.9 H10.4" stroke="#3a8db5" stroke-width="1" fill="none"/></svg>
<div class="t" style="left:185.00px;top:133.38px;height:12px;line-height:12px;font-size:9px;color:#1c6e1c;-webkit-text-stroke:0.2px #1c6e1c;transform:scaleX(0.9900);transform-origin:0 50%;">B5</div>
<div class="t" style="left:334.08px;top:133.38px;height:12px;line-height:12px;font-size:9px;color:#1c6e1c;-webkit-text-stroke:0.2px #1c6e1c;transform:scaleX(0.9050);transform-origin:0 50%;">52 255</div>
<div class="t" style="left:371.44px;top:133.38px;height:12px;line-height:12px;font-size:9px;color:#1c6e1c;-webkit-text-stroke:0.2px #1c6e1c;transform:scaleX(0.9200);transform-origin:0 50%;">44053</div>
<div class="t" style="left:411.21px;top:133.38px;height:12px;line-height:12px;font-size:9px;color:#1c6e1c;-webkit-text-stroke:0.2px #1c6e1c;transform:scaleX(0.9700);transform-origin:0 50%;">B6</div>
<div class="t" style="left:438.44px;top:133.38px;height:12px;line-height:12px;font-size:9px;color:#1c6e1c;-webkit-text-stroke:0.2px #1c6e1c;transform:scaleX(0.9650);transform-origin:0 50%;">Fwd</div>
<svg style="left:171.5px;top:147.53px" width="11" height="11" viewBox="0 0 11 11">
<circle cx="5.5" cy="5.5" r="5.05" fill="#d6d6d6" stroke="#7c7c7c" stroke-width="0.85"/>
<path d="M0.6 4.3 H3.7 L4.7 1.6 L5.8 5.6 L6.5 4.3 H10.4" stroke="#228a22" stroke-width="1" fill="none"/>
<path d="M0.6 6.9 H3.7 L4.6 6.1 L5.6 9.4 L6.6 6.9 H10.4" stroke="#3a8db5" stroke-width="1" fill="none"/></svg>
<div class="t" style="left:185.00px;top:147.62px;height:12px;line-height:12px;font-size:9px;color:#1c6e1c;-webkit-text-stroke:0.2px #1c6e1c;transform:scaleX(0.9900);transform-origin:0 50%;">C#5</div>
<div class="t" style="left:334.08px;top:147.62px;height:12px;line-height:12px;font-size:9px;color:#1c6e1c;-webkit-text-stroke:0.2px #1c6e1c;transform:scaleX(0.9050);transform-origin:0 50%;">51 685</div>
<div class="t" style="left:371.44px;top:147.62px;height:12px;line-height:12px;font-size:9px;color:#1c6e1c;-webkit-text-stroke:0.2px #1c6e1c;transform:scaleX(0.9200);transform-origin:0 50%;">44053</div>
<div class="t" style="left:408.54px;top:147.62px;height:12px;line-height:12px;font-size:9px;color:#1c6e1c;-webkit-text-stroke:0.2px #1c6e1c;transform:scaleX(0.9700);transform-origin:0 50%;">C#6</div>
<div class="t" style="left:438.44px;top:147.62px;height:12px;line-height:12px;font-size:9px;color:#1c6e1c;-webkit-text-stroke:0.2px #1c6e1c;transform:scaleX(0.9650);transform-origin:0 50%;">Fwd</div>
<svg style="left:171.5px;top:161.78px" width="11" height="11" viewBox="0 0 11 11">
<circle cx="5.5" cy="5.5" r="5.05" fill="#d6d6d6" stroke="#7c7c7c" stroke-width="0.85"/>
<path d="M0.6 4.3 H3.7 L4.7 1.6 L5.8 5.6 L6.5 4.3 H10.4" stroke="#228a22" stroke-width="1" fill="none"/>
<path d="M0.6 6.9 H3.7 L4.6 6.1 L5.6 9.4 L6.6 6.9 H10.4" stroke="#3a8db5" stroke-width="1" fill="none"/></svg>
<div class="t" style="left:185.00px;top:161.88px;height:12px;line-height:12px;font-size:9px;color:#1c6e1c;-webkit-text-stroke:0.2px #1c6e1c;transform:scaleX(0.9900);transform-origin:0 50%;">C3</div>
<div class="t" style="left:334.08px;top:161.88px;height:12px;line-height:12px;font-size:9px;color:#1c6e1c;-webkit-text-stroke:0.2px #1c6e1c;transform:scaleX(0.9050);transform-origin:0 50%;">55 728</div>
<div class="t" style="left:371.44px;top:161.88px;height:12px;line-height:12px;font-size:9px;color:#1c6e1c;-webkit-text-stroke:0.2px #1c6e1c;transform:scaleX(0.9200);transform-origin:0 50%;">44053</div>
<div class="t" style="left:410.96px;top:161.88px;height:12px;line-height:12px;font-size:9px;color:#1c6e1c;-webkit-text-stroke:0.2px #1c6e1c;transform:scaleX(0.9700);transform-origin:0 50%;">C4</div>
<div class="t" style="left:438.44px;top:161.88px;height:12px;line-height:12px;font-size:9px;color:#1c6e1c;-webkit-text-stroke:0.2px #1c6e1c;transform:scaleX(0.9650);transform-origin:0 50%;">Fwd</div>
<svg style="left:171.5px;top:176.03px" width="11" height="11" viewBox="0 0 11 11">
<circle cx="5.5" cy="5.5" r="5.05" fill="#d6d6d6" stroke="#7c7c7c" stroke-width="0.85"/>
<path d="M0.6 5.2 H3.9 L4.9 0.7 L6.4 10.1 L7.4 5.2 H10.4" stroke="#1f8a1f" stroke-width="1" fill="none" stroke-linejoin="round"/></svg>
<div class="t" style="left:185.00px;top:176.12px;height:12px;line-height:12px;font-size:9px;color:#1c6e1c;-webkit-text-stroke:0.2px #1c6e1c;transform:scaleX(0.9900);transform-origin:0 50%;">cent_f</div>
<div class="t" style="left:334.08px;top:176.12px;height:12px;line-height:12px;font-size:9px;color:#1c6e1c;-webkit-text-stroke:0.2px #1c6e1c;transform:scaleX(0.9050);transform-origin:0 50%;">60 440</div>
<div class="t" style="left:371.44px;top:176.12px;height:12px;line-height:12px;font-size:9px;color:#1c6e1c;-webkit-text-stroke:0.2px #1c6e1c;transform:scaleX(0.9200);transform-origin:0 50%;">44100</div>
<div class="t" style="left:410.72px;top:176.12px;height:12px;line-height:12px;font-size:9px;color:#1c6e1c;-webkit-text-stroke:0.2px #1c6e1c;transform:scaleX(0.9700);transform-origin:0 50%;">G4</div>
<div class="t" style="left:440.94px;top:176.12px;height:12px;line-height:12px;font-size:9px;color:#1c6e1c;-webkit-text-stroke:0.2px #1c6e1c;transform:scaleX(0.9650);transform-origin:0 50%;">Off</div>
<svg style="left:171.5px;top:190.28px" width="11" height="11" viewBox="0 0 11 11">
<circle cx="5.5" cy="5.5" r="5.05" fill="#d6d6d6" stroke="#7c7c7c" stroke-width="0.85"/>
<path d="M0.6 5.2 H3.9 L4.9 0.7 L6.4 10.1 L7.4 5.2 H10.4" stroke="#1f8a1f" stroke-width="1" fill="none" stroke-linejoin="round"/></svg>
<div class="t" style="left:185.00px;top:190.38px;height:12px;line-height:12px;font-size:9px;color:#1c6e1c;-webkit-text-stroke:0.2px #1c6e1c;transform:scaleX(0.9900);transform-origin:0 50%;">cent_pp</div>
<div class="t" style="left:334.08px;top:190.38px;height:12px;line-height:12px;font-size:9px;color:#1c6e1c;-webkit-text-stroke:0.2px #1c6e1c;transform:scaleX(0.9050);transform-origin:0 50%;">47 672</div>
<div class="t" style="left:371.44px;top:190.38px;height:12px;line-height:12px;font-size:9px;color:#1c6e1c;-webkit-text-stroke:0.2px #1c6e1c;transform:scaleX(0.9200);transform-origin:0 50%;">44100</div>
<div class="t" style="left:410.72px;top:190.38px;height:12px;line-height:12px;font-size:9px;color:#1c6e1c;-webkit-text-stroke:0.2px #1c6e1c;transform:scaleX(0.9700);transform-origin:0 50%;">G4</div>
<div class="t" style="left:440.94px;top:190.38px;height:12px;line-height:12px;font-size:9px;color:#1c6e1c;-webkit-text-stroke:0.2px #1c6e1c;transform:scaleX(0.9650);transform-origin:0 50%;">Off</div>
<svg style="left:171.5px;top:204.53px" width="11" height="11" viewBox="0 0 11 11">
<circle cx="5.5" cy="5.5" r="5.05" fill="#d6d6d6" stroke="#7c7c7c" stroke-width="0.85"/>
<path d="M0.6 5.2 H3.9 L4.9 0.7 L6.4 10.1 L7.4 5.2 H10.4" stroke="#1f8a1f" stroke-width="1" fill="none" stroke-linejoin="round"/></svg>
<div class="t" style="left:185.00px;top:204.62px;height:12px;line-height:12px;font-size:9px;color:#1c6e1c;-webkit-text-stroke:0.2px #1c6e1c;transform:scaleX(0.9900);transform-origin:0 50%;">Chimes</div>
<div class="t" style="left:334.08px;top:204.62px;height:12px;line-height:12px;font-size:9px;color:#1c6e1c;-webkit-text-stroke:0.2px #1c6e1c;transform:scaleX(0.9050);transform-origin:0 50%;">77 241</div>
<div class="t" style="left:371.44px;top:204.62px;height:12px;line-height:12px;font-size:9px;color:#1c6e1c;-webkit-text-stroke:0.2px #1c6e1c;transform:scaleX(0.9200);transform-origin:0 50%;">44100</div>
<div class="t" style="left:410.96px;top:204.62px;height:12px;line-height:12px;font-size:9px;color:#1c6e1c;-webkit-text-stroke:0.2px #1c6e1c;transform:scaleX(0.9700);transform-origin:0 50%;">C4</div>
<div class="t" style="left:440.94px;top:204.62px;height:12px;line-height:12px;font-size:9px;color:#1c6e1c;-webkit-text-stroke:0.2px #1c6e1c;transform:scaleX(0.9650);transform-origin:0 50%;">Off</div>
<svg style="left:171.5px;top:218.78px" width="11" height="11" viewBox="0 0 11 11">
<circle cx="5.5" cy="5.5" r="5.05" fill="#d6d6d6" stroke="#7c7c7c" stroke-width="0.85"/>
<path d="M0.6 4.3 H3.7 L4.7 1.6 L5.8 5.6 L6.5 4.3 H10.4" stroke="#228a22" stroke-width="1" fill="none"/>
<path d="M0.6 6.9 H3.7 L4.6 6.1 L5.6 9.4 L6.6 6.9 H10.4" stroke="#3a8db5" stroke-width="1" fill="none"/></svg>
<div class="t" style="left:185.00px;top:218.88px;height:12px;line-height:12px;font-size:9px;color:#1c6e1c;-webkit-text-stroke:0.2px #1c6e1c;transform:scaleX(0.9900);transform-origin:0 50%;">D#4</div>
<div class="t" style="left:334.08px;top:218.88px;height:12px;line-height:12px;font-size:9px;color:#1c6e1c;-webkit-text-stroke:0.2px #1c6e1c;transform:scaleX(0.9050);transform-origin:0 50%;">52 697</div>
<div class="t" style="left:371.44px;top:218.88px;height:12px;line-height:12px;font-size:9px;color:#1c6e1c;-webkit-text-stroke:0.2px #1c6e1c;transform:scaleX(0.9200);transform-origin:0 50%;">44053</div>
<div class="t" style="left:408.54px;top:218.88px;height:12px;line-height:12px;font-size:9px;color:#1c6e1c;-webkit-text-stroke:0.2px #1c6e1c;transform:scaleX(0.9700);transform-origin:0 50%;">D#5</div>
<div class="t" style="left:438.44px;top:218.88px;height:12px;line-height:12px;font-size:9px;color:#1c6e1c;-webkit-text-stroke:0.2px #1c6e1c;transform:scaleX(0.9650);transform-origin:0 50%;">Fwd</div>
<svg style="left:171.5px;top:233.03px" width="11" height="11" viewBox="0 0 11 11">
<circle cx="5.5" cy="5.5" r="5.05" fill="#d6d6d6" stroke="#7c7c7c" stroke-width="0.85"/>
<path d="M0.6 4.3 H3.7 L4.7 1.6 L5.8 5.6 L6.5 4.3 H10.4" stroke="#228a22" stroke-width="1" fill="none"/>
<path d="M0.6 6.9 H3.7 L4.6 6.1 L5.6 9.4 L6.6 6.9 H10.4" stroke="#3a8db5" stroke-width="1" fill="none"/></svg>
<div class="t" style="left:185.00px;top:233.12px;height:12px;line-height:12px;font-size:9px;color:#1c6e1c;-webkit-text-stroke:0.2px #1c6e1c;transform:scaleX(0.9900);transform-origin:0 50%;">D2</div>
<div class="t" style="left:334.08px;top:233.12px;height:12px;line-height:12px;font-size:9px;color:#1c6e1c;-webkit-text-stroke:0.2px #1c6e1c;transform:scaleX(0.9050);transform-origin:0 50%;">24 536</div>
<div class="t" style="left:371.44px;top:233.12px;height:12px;line-height:12px;font-size:9px;color:#1c6e1c;-webkit-text-stroke:0.2px #1c6e1c;transform:scaleX(0.9200);transform-origin:0 50%;">21872</div>
<div class="t" style="left:410.96px;top:233.12px;height:12px;line-height:12px;font-size:9px;color:#1c6e1c;-webkit-text-stroke:0.2px #1c6e1c;transform:scaleX(0.9700);transform-origin:0 50%;">D3</div>
<div class="t" style="left:438.44px;top:233.12px;height:12px;line-height:12px;font-size:9px;color:#1c6e1c;-webkit-text-stroke:0.2px #1c6e1c;transform:scaleX(0.9650);transform-origin:0 50%;">Fwd</div>
<svg style="left:171.5px;top:247.28px" width="11" height="11" viewBox="0 0 11 11">
<circle cx="5.5" cy="5.5" r="5.05" fill="#d6d6d6" stroke="#7c7c7c" stroke-width="0.85"/>
<path d="M0.6 4.3 H3.7 L4.7 1.6 L5.8 5.6 L6.5 4.3 H10.4" stroke="#228a22" stroke-width="1" fill="none"/>
<path d="M0.6 6.9 H3.7 L4.6 6.1 L5.6 9.4 L6.6 6.9 H10.4" stroke="#3a8db5" stroke-width="1" fill="none"/></svg>
<div class="t" style="left:185.00px;top:247.38px;height:12px;line-height:12px;font-size:9px;color:#1c6e1c;-webkit-text-stroke:0.2px #1c6e1c;transform:scaleX(0.9900);transform-origin:0 50%;">D2 2</div>
<div class="t" style="left:334.08px;top:247.38px;height:12px;line-height:12px;font-size:9px;color:#1c6e1c;-webkit-text-stroke:0.2px #1c6e1c;transform:scaleX(0.9050);transform-origin:0 50%;">73 637</div>
<div class="t" style="left:371.44px;top:247.38px;height:12px;line-height:12px;font-size:9px;color:#1c6e1c;-webkit-text-stroke:0.2px #1c6e1c;transform:scaleX(0.9200);transform-origin:0 50%;">27778</div>
<div class="t" style="left:410.96px;top:247.38px;height:12px;line-height:12px;font-size:9px;color:#1c6e1c;-webkit-text-stroke:0.2px #1c6e1c;transform:scaleX(0.9700);transform-origin:0 50%;">D3</div>
<div class="t" style="left:438.44px;top:247.38px;height:12px;line-height:12px;font-size:9px;color:#1c6e1c;-webkit-text-stroke:0.2px #1c6e1c;transform:scaleX(0.9650);transform-origin:0 50%;">Fwd</div>
<svg style="left:171.5px;top:261.52px" width="11" height="11" viewBox="0 0 11 11">
<circle cx="5.5" cy="5.5" r="5.05" fill="#d6d6d6" stroke="#7c7c7c" stroke-width="0.85"/>
<path d="M0.6 4.3 H3.7 L4.7 1.6 L5.8 5.6 L6.5 4.3 H10.4" stroke="#228a22" stroke-width="1" fill="none"/>
<path d="M0.6 6.9 H3.7 L4.6 6.1 L5.6 9.4 L6.6 6.9 H10.4" stroke="#3a8db5" stroke-width="1" fill="none"/></svg>
<div class="t" style="left:185.00px;top:261.62px;height:12px;line-height:12px;font-size:9px;color:#1c6e1c;-webkit-text-stroke:0.2px #1c6e1c;transform:scaleX(0.9900);transform-origin:0 50%;">D3</div>
<div class="t" style="left:334.08px;top:261.62px;height:12px;line-height:12px;font-size:9px;color:#1c6e1c;-webkit-text-stroke:0.2px #1c6e1c;transform:scaleX(0.9050);transform-origin:0 50%;">79 886</div>
<div class="t" style="left:371.44px;top:261.62px;height:12px;line-height:12px;font-size:9px;color:#1c6e1c;-webkit-text-stroke:0.2px #1c6e1c;transform:scaleX(0.9200);transform-origin:0 50%;">31250</div>
<div class="t" style="left:410.96px;top:261.62px;height:12px;line-height:12px;font-size:9px;color:#1c6e1c;-webkit-text-stroke:0.2px #1c6e1c;transform:scaleX(0.9700);transform-origin:0 50%;">D4</div>
<div class="t" style="left:438.44px;top:261.62px;height:12px;line-height:12px;font-size:9px;color:#1c6e1c;-webkit-text-stroke:0.2px #1c6e1c;transform:scaleX(0.9650);transform-origin:0 50%;">Fwd</div>
<svg style="left:171.5px;top:275.77px" width="11" height="11" viewBox="0 0 11 11">
<circle cx="5.5" cy="5.5" r="5.05" fill="#d6d6d6" stroke="#7c7c7c" stroke-width="0.85"/>
<path d="M0.6 4.3 H3.7 L4.7 1.6 L5.8 5.6 L6.5 4.3 H10.4" stroke="#228a22" stroke-width="1" fill="none"/>
<path d="M0.6 6.9 H3.7 L4.6 6.1 L5.6 9.4 L6.6 6.9 H10.4" stroke="#3a8db5" stroke-width="1" fill="none"/></svg>
<div class="t" style="left:185.00px;top:275.88px;height:12px;line-height:12px;font-size:9px;color:#1c6e1c;-webkit-text-stroke:0.2px #1c6e1c;transform:scaleX(0.9900);transform-origin:0 50%;">D4</div>
<div class="t" style="left:329.55px;top:275.88px;height:12px;line-height:12px;font-size:9px;color:#1c6e1c;-webkit-text-stroke:0.2px #1c6e1c;transform:scaleX(0.9050);transform-origin:0 50%;">107 744</div>
<div class="t" style="left:371.44px;top:275.88px;height:12px;line-height:12px;font-size:9px;color:#1c6e1c;-webkit-text-stroke:0.2px #1c6e1c;transform:scaleX(0.9200);transform-origin:0 50%;">39063</div>
<div class="t" style="left:410.96px;top:275.88px;height:12px;line-height:12px;font-size:9px;color:#1c6e1c;-webkit-text-stroke:0.2px #1c6e1c;transform:scaleX(0.9700);transform-origin:0 50%;">D5</div>
<div class="t" style="left:438.44px;top:275.88px;height:12px;line-height:12px;font-size:9px;color:#1c6e1c;-webkit-text-stroke:0.2px #1c6e1c;transform:scaleX(0.9650);transform-origin:0 50%;">Fwd</div>
<svg style="left:171.5px;top:290.02px" width="11" height="11" viewBox="0 0 11 11">
<circle cx="5.5" cy="5.5" r="5.05" fill="#d6d6d6" stroke="#7c7c7c" stroke-width="0.85"/>
<path d="M0.6 4.3 H3.7 L4.7 1.6 L5.8 5.6 L6.5 4.3 H10.4" stroke="#228a22" stroke-width="1" fill="none"/>
<path d="M0.6 6.9 H3.7 L4.6 6.1 L5.6 9.4 L6.6 6.9 H10.4" stroke="#3a8db5" stroke-width="1" fill="none"/></svg>
<div class="t" style="left:185.00px;top:290.12px;height:12px;line-height:12px;font-size:9px;color:#1c6e1c;-webkit-text-stroke:0.2px #1c6e1c;transform:scaleX(0.9900);transform-origin:0 50%;">D5</div>
<div class="t" style="left:329.55px;top:290.12px;height:12px;line-height:12px;font-size:9px;color:#1c6e1c;-webkit-text-stroke:0.2px #1c6e1c;transform:scaleX(0.9050);transform-origin:0 50%;">133 415</div>
<div class="t" style="left:371.44px;top:290.12px;height:12px;line-height:12px;font-size:9px;color:#1c6e1c;-webkit-text-stroke:0.2px #1c6e1c;transform:scaleX(0.9200);transform-origin:0 50%;">44053</div>
<div class="t" style="left:410.96px;top:290.12px;height:12px;line-height:12px;font-size:9px;color:#1c6e1c;-webkit-text-stroke:0.2px #1c6e1c;transform:scaleX(0.9700);transform-origin:0 50%;">D6</div>
<div class="t" style="left:438.44px;top:290.12px;height:12px;line-height:12px;font-size:9px;color:#1c6e1c;-webkit-text-stroke:0.2px #1c6e1c;transform:scaleX(0.9650);transform-origin:0 50%;">Fwd</div>
<svg style="left:171.5px;top:304.27px" width="11" height="11" viewBox="0 0 11 11">
<circle cx="5.5" cy="5.5" r="5.05" fill="#d6d6d6" stroke="#7c7c7c" stroke-width="0.85"/>
<path d="M0.6 5.2 H3.9 L4.9 0.7 L6.4 10.1 L7.4 5.2 H10.4" stroke="#1f8a1f" stroke-width="1" fill="none" stroke-linejoin="round"/></svg>
<div class="t" style="left:185.00px;top:304.38px;height:12px;line-height:12px;font-size:9px;color:#1c6e1c;-webkit-text-stroke:0.2px #1c6e1c;transform:scaleX(0.9900);transform-origin:0 50%;">drop_mf</div>
<div class="t" style="left:334.08px;top:304.38px;height:12px;line-height:12px;font-size:9px;color:#1c6e1c;-webkit-text-stroke:0.2px #1c6e1c;transform:scaleX(0.9050);transform-origin:0 50%;">15 887</div>
<div class="t" style="left:371.44px;top:304.38px;height:12px;line-height:12px;font-size:9px;color:#1c6e1c;-webkit-text-stroke:0.2px #1c6e1c;transform:scaleX(0.9200);transform-origin:0 50%;">44100</div>
<div class="t" style="left:411.21px;top:304.38px;height:12px;line-height:12px;font-size:9px;color:#1c6e1c;-webkit-text-stroke:0.2px #1c6e1c;transform:scaleX(0.9700);transform-origin:0 50%;">E4</div>
<div class="t" style="left:440.94px;top:304.38px;height:12px;line-height:12px;font-size:9px;color:#1c6e1c;-webkit-text-stroke:0.2px #1c6e1c;transform:scaleX(0.9650);transform-origin:0 50%;">Off</div>
<svg style="left:171.5px;top:318.52px" width="11" height="11" viewBox="0 0 11 11">
<circle cx="5.5" cy="5.5" r="5.05" fill="#d6d6d6" stroke="#7c7c7c" stroke-width="0.85"/>
<path d="M0.6 5.2 H3.9 L4.9 0.7 L6.4 10.1 L7.4 5.2 H10.4" stroke="#1f8a1f" stroke-width="1" fill="none" stroke-linejoin="round"/></svg>
<div class="t" style="left:185.00px;top:318.62px;height:12px;line-height:12px;font-size:9px;color:#1c6e1c;-webkit-text-stroke:0.2px #1c6e1c;transform:scaleX(0.9900);transform-origin:0 50%;">drop_p</div>
<div class="t" style="left:334.08px;top:318.62px;height:12px;line-height:12px;font-size:9px;color:#1c6e1c;-webkit-text-stroke:0.2px #1c6e1c;transform:scaleX(0.9050);transform-origin:0 50%;">17 102</div>
<div class="t" style="left:371.44px;top:318.62px;height:12px;line-height:12px;font-size:9px;color:#1c6e1c;-webkit-text-stroke:0.2px #1c6e1c;transform:scaleX(0.9200);transform-origin:0 50%;">44100</div>
<div class="t" style="left:411.21px;top:318.62px;height:12px;line-height:12px;font-size:9px;color:#1c6e1c;-webkit-text-stroke:0.2px #1c6e1c;transform:scaleX(0.9700);transform-origin:0 50%;">E4</div>
<div class="t" style="left:440.94px;top:318.62px;height:12px;line-height:12px;font-size:9px;color:#1c6e1c;-webkit-text-stroke:0.2px #1c6e1c;transform:scaleX(0.9650);transform-origin:0 50%;">Off</div>
<svg style="left:171.5px;top:332.77px" width="11" height="11" viewBox="0 0 11 11">
<circle cx="5.5" cy="5.5" r="5.05" fill="#d6d6d6" stroke="#7c7c7c" stroke-width="0.85"/>
<path d="M0.6 4.3 H3.7 L4.7 1.6 L5.8 5.6 L6.5 4.3 H10.4" stroke="#228a22" stroke-width="1" fill="none"/>
<path d="M0.6 6.9 H3.7 L4.6 6.1 L5.6 9.4 L6.6 6.9 H10.4" stroke="#3a8db5" stroke-width="1" fill="none"/></svg>
<div class="t" style="left:185.00px;top:332.88px;height:12px;line-height:12px;font-size:9px;color:#1c6e1c;-webkit-text-stroke:0.2px #1c6e1c;transform:scaleX(0.9900);transform-origin:0 50%;">E1</div>
<div class="t" style="left:334.08px;top:332.88px;height:12px;line-height:12px;font-size:9px;color:#1c6e1c;-webkit-text-stroke:0.2px #1c6e1c;transform:scaleX(0.9050);transform-origin:0 50%;">32 600</div>
<div class="t" style="left:371.44px;top:332.88px;height:12px;line-height:12px;font-size:9px;color:#1c6e1c;-webkit-text-stroke:0.2px #1c6e1c;transform:scaleX(0.9200);transform-origin:0 50%;">22150</div>
<div class="t" style="left:411.21px;top:332.88px;height:12px;line-height:12px;font-size:9px;color:#1c6e1c;-webkit-text-stroke:0.2px #1c6e1c;transform:scaleX(0.9700);transform-origin:0 50%;">E2</div>
<div class="t" style="left:438.44px;top:332.88px;height:12px;line-height:12px;font-size:9px;color:#1c6e1c;-webkit-text-stroke:0.2px #1c6e1c;transform:scaleX(0.9650);transform-origin:0 50%;">Fwd</div>
<svg style="left:171.5px;top:347.02px" width="11" height="11" viewBox="0 0 11 11">
<circle cx="5.5" cy="5.5" r="5.05" fill="#d6d6d6" stroke="#7c7c7c" stroke-width="0.85"/>
<path d="M0.6 4.3 H3.7 L4.7 1.6 L5.8 5.6 L6.5 4.3 H10.4" stroke="#228a22" stroke-width="1" fill="none"/>
<path d="M0.6 6.9 H3.7 L4.6 6.1 L5.6 9.4 L6.6 6.9 H10.4" stroke="#3a8db5" stroke-width="1" fill="none"/></svg>
<div class="t" style="left:185.00px;top:347.12px;height:12px;line-height:12px;font-size:9px;color:#1c6e1c;-webkit-text-stroke:0.2px #1c6e1c;transform:scaleX(0.9900);transform-origin:0 50%;">F#0</div>
<div class="t" style="left:334.08px;top:347.12px;height:12px;line-height:12px;font-size:9px;color:#1c6e1c;-webkit-text-stroke:0.2px #1c6e1c;transform:scaleX(0.9050);transform-origin:0 50%;">41 843</div>
<div class="t" style="left:371.44px;top:347.12px;height:12px;line-height:12px;font-size:9px;color:#1c6e1c;-webkit-text-stroke:0.2px #1c6e1c;transform:scaleX(0.9200);transform-origin:0 50%;">22027</div>
<div class="t" style="left:409.02px;top:347.12px;height:12px;line-height:12px;font-size:9px;color:#1c6e1c;-webkit-text-stroke:0.2px #1c6e1c;transform:scaleX(0.9700);transform-origin:0 50%;">F#1</div>
<div class="t" style="left:438.44px;top:347.12px;height:12px;line-height:12px;font-size:9px;color:#1c6e1c;-webkit-text-stroke:0.2px #1c6e1c;transform:scaleX(0.9650);transform-origin:0 50%;">Fwd</div>
<svg style="left:171.5px;top:361.27px" width="11" height="11" viewBox="0 0 11 11">
<circle cx="5.5" cy="5.5" r="5.05" fill="#d6d6d6" stroke="#7c7c7c" stroke-width="0.85"/>
<path d="M0.6 4.3 H3.7 L4.7 1.6 L5.8 5.6 L6.5 4.3 H10.4" stroke="#228a22" stroke-width="1" fill="none"/>
<path d="M0.6 6.9 H3.7 L4.6 6.1 L5.6 9.4 L6.6 6.9 H10.4" stroke="#3a8db5" stroke-width="1" fill="none"/></svg>
<div class="t" style="left:185.00px;top:361.38px;height:12px;line-height:12px;font-size:9px;color:#1c6e1c;-webkit-text-stroke:0.2px #1c6e1c;transform:scaleX(0.9900);transform-origin:0 50%;">F#2</div>
<div class="t" style="left:334.08px;top:361.38px;height:12px;line-height:12px;font-size:9px;color:#1c6e1c;-webkit-text-stroke:0.2px #1c6e1c;transform:scaleX(0.9050);transform-origin:0 50%;">72 781</div>
<div class="t" style="left:371.44px;top:361.38px;height:12px;line-height:12px;font-size:9px;color:#1c6e1c;-webkit-text-stroke:0.2px #1c6e1c;transform:scaleX(0.9200);transform-origin:0 50%;">27778</div>
<div class="t" style="left:409.02px;top:361.38px;height:12px;line-height:12px;font-size:9px;color:#1c6e1c;-webkit-text-stroke:0.2px #1c6e1c;transform:scaleX(0.9700);transform-origin:0 50%;">F#3</div>
<div class="t" style="left:438.44px;top:361.38px;height:12px;line-height:12px;font-size:9px;color:#1c6e1c;-webkit-text-stroke:0.2px #1c6e1c;transform:scaleX(0.9650);transform-origin:0 50%;">Fwd</div>
<svg style="left:171.5px;top:375.52px" width="11" height="11" viewBox="0 0 11 11">
<circle cx="5.5" cy="5.5" r="5.05" fill="#d6d6d6" stroke="#7c7c7c" stroke-width="0.85"/>
<path d="M0.6 4.3 H3.7 L4.7 1.6 L5.8 5.6 L6.5 4.3 H10.4" stroke="#228a22" stroke-width="1" fill="none"/>
<path d="M0.6 6.9 H3.7 L4.6 6.1 L5.6 9.4 L6.6 6.9 H10.4" stroke="#3a8db5" stroke-width="1" fill="none"/></svg>
<div class="t" style="left:185.00px;top:375.62px;height:12px;line-height:12px;font-size:9px;color:#1c6e1c;-webkit-text-stroke:0.2px #1c6e1c;transform:scaleX(0.9900);transform-origin:0 50%;">F#3</div>
<div class="t" style="left:334.08px;top:375.62px;height:12px;line-height:12px;font-size:9px;color:#1c6e1c;-webkit-text-stroke:0.2px #1c6e1c;transform:scaleX(0.9050);transform-origin:0 50%;">87 309</div>
<div class="t" style="left:371.44px;top:375.62px;height:12px;line-height:12px;font-size:9px;color:#1c6e1c;-webkit-text-stroke:0.2px #1c6e1c;transform:scaleX(0.9200);transform-origin:0 50%;">31250</div>
<div class="t" style="left:409.02px;top:375.62px;height:12px;line-height:12px;font-size:9px;color:#1c6e1c;-webkit-text-stroke:0.2px #1c6e1c;transform:scaleX(0.9700);transform-origin:0 50%;">F#4</div>
<div class="t" style="left:438.44px;top:375.62px;height:12px;line-height:12px;font-size:9px;color:#1c6e1c;-webkit-text-stroke:0.2px #1c6e1c;transform:scaleX(0.9650);transform-origin:0 50%;">Fwd</div>
<svg style="left:171.5px;top:389.77px" width="11" height="11" viewBox="0 0 11 11">
<circle cx="5.5" cy="5.5" r="5.05" fill="#d6d6d6" stroke="#7c7c7c" stroke-width="0.85"/>
<path d="M0.6 4.3 H3.7 L4.7 1.6 L5.8 5.6 L6.5 4.3 H10.4" stroke="#228a22" stroke-width="1" fill="none"/>
<path d="M0.6 6.9 H3.7 L4.6 6.1 L5.6 9.4 L6.6 6.9 H10.4" stroke="#3a8db5" stroke-width="1" fill="none"/></svg>
<div class="t" style="left:185.00px;top:389.88px;height:12px;line-height:12px;font-size:9px;color:#1c6e1c;-webkit-text-stroke:0.2px #1c6e1c;transform:scaleX(0.9900);transform-origin:0 50%;">F#4</div>
<div class="t" style="left:330.15px;top:389.88px;height:12px;line-height:12px;font-size:9px;color:#1c6e1c;-webkit-text-stroke:0.2px #1c6e1c;transform:scaleX(0.9050);transform-origin:0 50%;">116 616</div>
<div class="t" style="left:371.44px;top:389.88px;height:12px;line-height:12px;font-size:9px;color:#1c6e1c;-webkit-text-stroke:0.2px #1c6e1c;transform:scaleX(0.9200);transform-origin:0 50%;">44053</div>
<div class="t" style="left:409.02px;top:389.88px;height:12px;line-height:12px;font-size:9px;color:#1c6e1c;-webkit-text-stroke:0.2px #1c6e1c;transform:scaleX(0.9700);transform-origin:0 50%;">F#5</div>
<div class="t" style="left:438.44px;top:389.88px;height:12px;line-height:12px;font-size:9px;color:#1c6e1c;-webkit-text-stroke:0.2px #1c6e1c;transform:scaleX(0.9650);transform-origin:0 50%;">Fwd</div>
<svg style="left:171.5px;top:404.02px" width="11" height="11" viewBox="0 0 11 11">
<circle cx="5.5" cy="5.5" r="5.05" fill="#d6d6d6" stroke="#7c7c7c" stroke-width="0.85"/>
<path d="M0.6 4.3 H3.7 L4.7 1.6 L5.8 5.6 L6.5 4.3 H10.4" stroke="#228a22" stroke-width="1" fill="none"/>
<path d="M0.6 6.9 H3.7 L4.6 6.1 L5.6 9.4 L6.6 6.9 H10.4" stroke="#3a8db5" stroke-width="1" fill="none"/></svg>
<div class="t" style="left:185.00px;top:404.12px;height:12px;line-height:12px;font-size:9px;color:#1c6e1c;-webkit-text-stroke:0.2px #1c6e1c;transform:scaleX(0.9900);transform-origin:0 50%;">F#5</div>
<div class="t" style="left:334.08px;top:404.12px;height:12px;line-height:12px;font-size:9px;color:#1c6e1c;-webkit-text-stroke:0.2px #1c6e1c;transform:scaleX(0.9050);transform-origin:0 50%;">51 579</div>
<div class="t" style="left:371.44px;top:404.12px;height:12px;line-height:12px;font-size:9px;color:#1c6e1c;-webkit-text-stroke:0.2px #1c6e1c;transform:scaleX(0.9200);transform-origin:0 50%;">44053</div>
<div class="t" style="left:409.02px;top:404.12px;height:12px;line-height:12px;font-size:9px;color:#1c6e1c;-webkit-text-stroke:0.2px #1c6e1c;transform:scaleX(0.9700);transform-origin:0 50%;">F#6</div>
<div class="t" style="left:438.44px;top:404.12px;height:12px;line-height:12px;font-size:9px;color:#1c6e1c;-webkit-text-stroke:0.2px #1c6e1c;transform:scaleX(0.9650);transform-origin:0 50%;">Fwd</div>
<svg style="left:171.5px;top:418.27px" width="11" height="11" viewBox="0 0 11 11">
<circle cx="5.5" cy="5.5" r="5.05" fill="#d6d6d6" stroke="#7c7c7c" stroke-width="0.85"/>
<path d="M0.6 4.3 H3.7 L4.7 1.6 L5.8 5.6 L6.5 4.3 H10.4" stroke="#228a22" stroke-width="1" fill="none"/>
<path d="M0.6 6.9 H3.7 L4.6 6.1 L5.6 9.4 L6.6 6.9 H10.4" stroke="#3a8db5" stroke-width="1" fill="none"/></svg>
<div class="t" style="left:185.00px;top:418.38px;height:12px;line-height:12px;font-size:9px;color:#1c6e1c;-webkit-text-stroke:0.2px #1c6e1c;transform:scaleX(0.9900);transform-origin:0 50%;">F3</div>
<div class="t" style="left:334.08px;top:418.38px;height:12px;line-height:12px;font-size:9px;color:#1c6e1c;-webkit-text-stroke:0.2px #1c6e1c;transform:scaleX(0.9050);transform-origin:0 50%;">49 656</div>
<div class="t" style="left:371.44px;top:418.38px;height:12px;line-height:12px;font-size:9px;color:#1c6e1c;-webkit-text-stroke:0.2px #1c6e1c;transform:scaleX(0.9200);transform-origin:0 50%;">44053</div>
<div class="t" style="left:411.45px;top:418.38px;height:12px;line-height:12px;font-size:9px;color:#1c6e1c;-webkit-text-stroke:0.2px #1c6e1c;transform:scaleX(0.9700);transform-origin:0 50%;">F4</div>
<div class="t" style="left:438.44px;top:418.38px;height:12px;line-height:12px;font-size:9px;color:#1c6e1c;-webkit-text-stroke:0.2px #1c6e1c;transform:scaleX(0.9650);transform-origin:0 50%;">Fwd</div>
<svg style="left:171.5px;top:432.52px" width="11" height="11" viewBox="0 0 11 11">
<circle cx="5.5" cy="5.5" r="5.05" fill="#d6d6d6" stroke="#7c7c7c" stroke-width="0.85"/>
<path d="M0.6 5.2 H3.9 L4.9 0.7 L6.4 10.1 L7.4 5.2 H10.4" stroke="#1f8a1f" stroke-width="1" fill="none" stroke-linejoin="round"/></svg>
<div class="t" style="left:185.00px;top:432.62px;height:12px;line-height:12px;font-size:9px;color:#1c6e1c;-webkit-text-stroke:0.2px #1c6e1c;transform:scaleX(0.9900);transform-origin:0 50%;">FC: C-5</div>
<div class="t" style="left:334.08px;top:432.62px;height:12px;line-height:12px;font-size:9px;color:#1c6e1c;-webkit-text-stroke:0.2px #1c6e1c;transform:scaleX(0.9050);transform-origin:0 50%;">45 781</div>
<div class="t" style="left:371.44px;top:432.62px;height:12px;line-height:12px;font-size:9px;color:#1c6e1c;-webkit-text-stroke:0.2px #1c6e1c;transform:scaleX(0.9200);transform-origin:0 50%;">44100</div>
<div class="t" style="left:410.96px;top:432.62px;height:12px;line-height:12px;font-size:9px;color:#1c6e1c;-webkit-text-stroke:0.2px #1c6e1c;transform:scaleX(0.9700);transform-origin:0 50%;">C4</div>
<div class="t" style="left:438.44px;top:432.62px;height:12px;line-height:12px;font-size:9px;color:#1c6e1c;-webkit-text-stroke:0.2px #1c6e1c;transform:scaleX(0.9650);transform-origin:0 50%;">Fwd</div>
<svg style="left:171.5px;top:446.77px" width="11" height="11" viewBox="0 0 11 11">
<circle cx="5.5" cy="5.5" r="5.05" fill="#d6d6d6" stroke="#7c7c7c" stroke-width="0.85"/>
<path d="M0.6 4.3 H3.7 L4.7 1.6 L5.8 5.6 L6.5 4.3 H10.4" stroke="#228a22" stroke-width="1" fill="none"/>
<path d="M0.6 6.9 H3.7 L4.6 6.1 L5.6 9.4 L6.6 6.9 H10.4" stroke="#3a8db5" stroke-width="1" fill="none"/></svg>
<div class="t" style="left:185.00px;top:446.88px;height:12px;line-height:12px;font-size:9px;color:#1c6e1c;-webkit-text-stroke:0.2px #1c6e1c;transform:scaleX(0.9900);transform-origin:0 50%;">G#4</div>
<div class="t" style="left:334.08px;top:446.88px;height:12px;line-height:12px;font-size:9px;color:#1c6e1c;-webkit-text-stroke:0.2px #1c6e1c;transform:scaleX(0.9050);transform-origin:0 50%;">52 062</div>
<div class="t" style="left:371.44px;top:446.88px;height:12px;line-height:12px;font-size:9px;color:#1c6e1c;-webkit-text-stroke:0.2px #1c6e1c;transform:scaleX(0.9200);transform-origin:0 50%;">44053</div>
<div class="t" style="left:408.30px;top:446.88px;height:12px;line-height:12px;font-size:9px;color:#1c6e1c;-webkit-text-stroke:0.2px #1c6e1c;transform:scaleX(0.9700);transform-origin:0 50%;">G#5</div>
<div class="t" style="left:438.44px;top:446.88px;height:12px;line-height:12px;font-size:9px;color:#1c6e1c;-webkit-text-stroke:0.2px #1c6e1c;transform:scaleX(0.9650);transform-origin:0 50%;">Fwd</div>
<svg style="left:171.5px;top:461.02px" width="11" height="11" viewBox="0 0 11 11">
<circle cx="5.5" cy="5.5" r="5.05" fill="#d6d6d6" stroke="#7c7c7c" stroke-width="0.85"/>
<path d="M0.6 4.3 H3.7 L4.7 1.6 L5.8 5.6 L6.5 4.3 H10.4" stroke="#228a22" stroke-width="1" fill="none"/>
<path d="M0.6 6.9 H3.7 L4.6 6.1 L5.6 9.4 L6.6 6.9 H10.4" stroke="#3a8db5" stroke-width="1" fill="none"/></svg>
<div class="t" style="left:185.00px;top:461.12px;height:12px;line-height:12px;font-size:9px;color:#1c6e1c;-webkit-text-stroke:0.2px #1c6e1c;transform:scaleX(0.9900);transform-origin:0 50%;">G2</div>
<div class="t" style="left:334.08px;top:461.12px;height:12px;line-height:12px;font-size:9px;color:#1c6e1c;-webkit-text-stroke:0.2px #1c6e1c;transform:scaleX(0.9050);transform-origin:0 50%;">27 143</div>
<div class="t" style="left:371.44px;top:461.12px;height:12px;line-height:12px;font-size:9px;color:#1c6e1c;-webkit-text-stroke:0.2px #1c6e1c;transform:scaleX(0.9200);transform-origin:0 50%;">22613</div>
<div class="t" style="left:410.72px;top:461.12px;height:12px;line-height:12px;font-size:9px;color:#1c6e1c;-webkit-text-stroke:0.2px #1c6e1c;transform:scaleX(0.9700);transform-origin:0 50%;">G3</div>
<div class="t" style="left:438.44px;top:461.12px;height:12px;line-height:12px;font-size:9px;color:#1c6e1c;-webkit-text-stroke:0.2px #1c6e1c;transform:scaleX(0.9650);transform-origin:0 50%;">Fwd</div>
<div class="a" style="left:462px;top:42px;width:1.5px;height:431px;background:#fff"></div>
<div class="a" style="left:463.5px;top:42px;width:13.5px;height:431px;background:#f0f0f0"></div>
<svg style="left:466.5px;top:47.5px" width="7" height="4" viewBox="0 0 7 4"><path d="M0 4 L3.5 0 L7 4z" fill="#e0e0e0"/></svg>
<svg style="left:466.5px;top:465.5px" width="7" height="4" viewBox="0 0 7 4"><path d="M0 0 L3.5 4 L7 0z" fill="#e0e0e0"/></svg>
<div class="a" style="left:469px;top:67px;width:1.6px;height:157px;background:#858585"></div>
<div class="a" style="left:477px;top:42px;width:1.3px;height:431px;background:#fcfcfc"></div>
<div class="a" style="left:478.2px;top:42px;width:1px;height:431px;background:#cfcfcf"></div>
<div class="a" style="left:479.2px;top:42px;width:381.8px;height:431px;background:#f9f9f9"></div>
<div class="a" style="left:526.1px;top:43.8px;width:46.69999999999993px;height:17.7px;background:#f2f2f2;border-left:1px solid #e4e4e4;border-top:1px solid #e4e4e4"></div>
<div class="t" style="left:534.60px;top:47.20px;height:12px;line-height:12px;font-size:9px;color:#1b1b2a;-webkit-text-stroke:0.2px #1b1b2a;transform:scaleX(1.0123);transform-origin:0 50%;">Volume</div>
<div class="a" style="left:572.8px;top:43.8px;width:47.90000000000009px;height:17.7px;background:#f2f2f2;border-left:1px solid #e4e4e4;border-top:1px solid #e4e4e4"></div>
<div class="t" style="left:586.60px;top:47.20px;height:12px;line-height:12px;font-size:9px;color:#1b1b2a;-webkit-text-stroke:0.2px #1b1b2a;transform:scaleX(1.0592);transform-origin:0 50%;">Pitch</div>
<div class="a" style="left:620.7px;top:43.8px;width:48.19999999999993px;height:17.7px;background:#f2f2f2;border-left:1px solid #e4e4e4;border-top:1px solid #e4e4e4"></div>
<div class="t" style="left:636.00px;top:47.20px;height:12px;line-height:12px;font-size:9px;color:#1b1b2a;-webkit-text-stroke:0.2px #1b1b2a;transform:scaleX(0.9900);transform-origin:0 50%;">Filter</div>
<div class="a" style="left:668.9px;top:43.8px;width:46.89999999999998px;height:17.7px;background:#f2f2f2;border-left:1px solid #e4e4e4;border-top:1px solid #e4e4e4"></div>
<div class="t" style="left:685.80px;top:47.20px;height:12px;line-height:12px;font-size:9px;color:#1b1b2a;-webkit-text-stroke:0.2px #1b1b2a;transform:scaleX(1.0714);transform-origin:0 50%;">Mix</div>
<div class="a" style="left:715.3px;top:43.8px;width:1px;height:17.7px;background:#e4e4e4"></div>
<div class="a" style="left:716.3px;top:43.8px;width:144.7px;height:17.7px;background:#efefef"></div>
<div class="t" style="left:486.70px;top:46.70px;height:12px;line-height:12px;font-size:9px;color:#1b1b2a;-webkit-text-stroke:0.2px #1b1b2a;transform:scaleX(0.9397);transform-origin:0 50%;">General</div>
<div class="t" style="left:787.40px;top:46.40px;height:12px;line-height:12px;font-size:9px;color:#2a7a2a;-webkit-text-stroke:0.2px #2a7a2a;transform:scaleX(0.9228);transform-origin:0 50%;">Layer 1: S A0..C8</div>
<div class="a" style="left:483.2px;top:73px;width:377.8px;height:1px;background:#d8d8d8"></div>
<div class="a" style="left:490px;top:68px;width:61px;height:10px;background:#f9f9f9"></div>
<div class="t" style="left:491.70px;top:67.00px;height:12px;line-height:12px;font-size:9px;color:#0c4ad4;-webkit-text-stroke:0.2px #0c4ad4;transform:scaleX(0.9019);transform-origin:0 50%;">Playback trigger</div>
<div class="t" style="left:497.40px;top:85.00px;height:12px;line-height:12px;font-size:9px;color:#1b1b2a;-webkit-text-stroke:0.2px #1b1b2a;transform:scaleX(0.9189);transform-origin:0 50%;">Key range:</div>
<div class="a" style="left:560.5px;top:83.4px;width:34.799999999999955px;height:14.599999999999994px;background:#fff;border:1px solid #dcdcdc;border-bottom:1px solid #d0d0d0"></div>
<div class="t" style="left:563.00px;top:84.70px;height:12px;line-height:12px;font-size:9px;color:#666;-webkit-text-stroke:0.2px #666;transform:scaleX(0.9500);transform-origin:0 50%;">C-1</div>
<svg style="left:584.8px;top:88.7px" width="7" height="4" viewBox="0 0 7 4"><path d="M0.3 0.3 L3.5 3.5 L6.7 0.3" stroke="#555" stroke-width="0.9" fill="none"/></svg>
<div class="t" style="left:601.30px;top:88.60px;height:12px;line-height:12px;font-size:9px;color:#2a3a6a;-webkit-text-stroke:0.4px #2a3a6a;transform:scaleX(0.9200);transform-origin:0 50%;">...</div>
<div class="a" style="left:614.3px;top:83.4px;width:34.700000000000045px;height:14.599999999999994px;background:#fff;border:1px solid #dcdcdc;border-bottom:1px solid #d0d0d0"></div>
<div class="t" style="left:616.80px;top:84.70px;height:12px;line-height:12px;font-size:9px;color:#666;-webkit-text-stroke:0.2px #666;transform:scaleX(0.9500);transform-origin:0 50%;">G9</div>
<svg style="left:638.5px;top:88.7px" width="7" height="4" viewBox="0 0 7 4"><path d="M0.3 0.3 L3.5 3.5 L6.7 0.3" stroke="#555" stroke-width="0.9" fill="none"/></svg>
<div class="t" style="left:497.40px;top:103.50px;height:12px;line-height:12px;font-size:9px;color:#1b1b2a;-webkit-text-stroke:0.2px #1b1b2a;transform:scaleX(0.9213);transform-origin:0 50%;">Velocity range:</div>
<div class="a" style="left:560.5px;top:102px;width:34.799999999999955px;height:14.599999999999994px;background:#fff;border:1px solid #dcdcdc;border-bottom:1.3px solid #5a5a5a"></div>
<div class="t" style="left:563.00px;top:103.30px;height:12px;line-height:12px;font-size:9px;color:#666;-webkit-text-stroke:0.2px #666;transform:scaleX(0.9500);transform-origin:0 50%;">0</div>
<div class="t" style="left:601.30px;top:103.00px;height:12px;line-height:12px;font-size:9px;color:#2a3a6a;-webkit-text-stroke:0.4px #2a3a6a;transform:scaleX(0.9200);transform-origin:0 50%;">...</div>
<div class="a" style="left:614.3px;top:102px;width:34.700000000000045px;height:14.599999999999994px;background:#fff;border:1px solid #dcdcdc;border-bottom:1.3px solid #5a5a5a"></div>
<div class="t" style="left:616.80px;top:103.30px;height:12px;line-height:12px;font-size:9px;color:#666;-webkit-text-stroke:0.2px #666;transform:scaleX(0.9500);transform-origin:0 50%;">127</div>
<div class="t" style="left:497.40px;top:129.00px;height:12px;line-height:12px;font-size:9px;color:#1b1b2a;-webkit-text-stroke:0.2px #1b1b2a;transform:scaleX(0.9405);transform-origin:0 50%;">Trigger type:</div>
<div class="a" style="left:560.5px;top:127.7px;width:71.89999999999998px;height:14.799999999999997px;background:#fff;border:1px solid #dcdcdc;border-bottom:1px solid #d0d0d0"></div>
<div class="t" style="left:563.00px;top:129.10px;height:12px;line-height:12px;font-size:9px;color:#666;-webkit-text-stroke:0.2px #666;transform:scaleX(0.8680);transform-origin:0 50%;">Key Press</div>
<svg style="left:621.9px;top:133.1px" width="7" height="4" viewBox="0 0 7 4"><path d="M0.3 0.3 L3.5 3.5 L6.7 0.3" stroke="#555" stroke-width="0.9" fill="none"/></svg>
<div class="t" style="left:699.80px;top:85.00px;height:12px;line-height:12px;font-size:9px;color:#1b1b2a;-webkit-text-stroke:0.2px #1b1b2a;transform:scaleX(0.8975);transform-origin:0 50%;">Sustain pedal:</div>
<div class="a" style="left:765.5px;top:83.4px;width:73.10000000000002px;height:15.199999999999989px;background:#fff;border:1px solid #dcdcdc;border-bottom:1px solid #d0d0d0"></div>
<div class="t" style="left:768.00px;top:85.00px;height:12px;line-height:12px;font-size:9px;color:#666;-webkit-text-stroke:0.2px #666;transform:scaleX(0.9267);transform-origin:0 50%;">Don&#x27;t switch</div>
<svg style="left:828.1px;top:89.0px" width="7" height="4" viewBox="0 0 7 4"><path d="M0.3 0.3 L3.5 3.5 L6.7 0.3" stroke="#555" stroke-width="0.9" fill="none"/></svg>
<div class="t" style="left:699.80px;top:103.50px;height:12px;line-height:12px;font-size:9px;color:#1b1b2a;-webkit-text-stroke:0.2px #1b1b2a;transform:scaleX(0.9041);transform-origin:0 50%;">Delay time:</div>
<div class="a" style="left:765.8px;top:102.5px;width:37.60000000000002px;height:14.099999999999994px;background:#fff;border:1px solid #dcdcdc;border-bottom:1.3px solid #5a5a5a"></div>
<div class="t" style="left:768.30px;top:103.55px;height:12px;line-height:12px;font-size:9px;color:#777;-webkit-text-stroke:0.2px #777;transform:scaleX(0.9500);transform-origin:0 50%;">0.0</div>
<div class="t" style="left:810.00px;top:104.00px;height:12px;line-height:12px;font-size:9px;color:#1b1b2a;-webkit-text-stroke:0.2px #1b1b2a;transform:scaleX(0.9200);transform-origin:0 50%;">s</div>
<div class="a" style="left:787.3px;top:131.8px;width:9.5px;height:10px;border:1px solid #333;border-radius:1.5px;background:#fff"></div>
<div class="t" style="left:799.00px;top:131.00px;height:12px;line-height:12px;font-size:9px;color:#1b1b2a;-webkit-text-stroke:0.2px #1b1b2a;transform:scaleX(0.8905);transform-origin:0 50%;">Drum kit view</div>
<div class="a" style="left:483.2px;top:154.5px;width:377px;height:1px;background:#dcdcdc"></div>
<div class="a" style="left:490px;top:149px;width:33px;height:10px;background:#f9f9f9"></div>
<div class="t" style="left:491.50px;top:148.50px;height:12px;line-height:12px;font-size:9px;color:#0c4ad4;-webkit-text-stroke:0.2px #0c4ad4;transform:scaleX(0.8991);transform-origin:0 50%;">Keymap</div>
<div class="t" style="left:514.17px;top:159.00px;height:12px;line-height:12px;font-size:9px;color:#1b1b2a;-webkit-text-stroke:0.2px #1b1b2a;transform:scaleX(0.9200);transform-origin:0 50%;">0</div>
<div class="t" style="left:550.92px;top:159.00px;height:12px;line-height:12px;font-size:9px;color:#1b1b2a;-webkit-text-stroke:0.2px #1b1b2a;transform:scaleX(0.9200);transform-origin:0 50%;">1</div>
<div class="t" style="left:587.67px;top:159.00px;height:12px;line-height:12px;font-size:9px;color:#1b1b2a;-webkit-text-stroke:0.2px #1b1b2a;transform:scaleX(0.9200);transform-origin:0 50%;">2</div>
<div class="t" style="left:624.42px;top:159.00px;height:12px;line-height:12px;font-size:9px;color:#1b1b2a;-webkit-text-stroke:0.2px #1b1b2a;transform:scaleX(0.9200);transform-origin:0 50%;">3</div>
<div class="t" style="left:661.17px;top:159.00px;height:12px;line-height:12px;font-size:9px;color:#1b1b2a;-webkit-text-stroke:0.2px #1b1b2a;transform:scaleX(0.9200);transform-origin:0 50%;">4</div>
<div class="t" style="left:697.92px;top:159.00px;height:12px;line-height:12px;font-size:9px;color:#1b1b2a;-webkit-text-stroke:0.2px #1b1b2a;transform:scaleX(0.9200);transform-origin:0 50%;">5</div>
<div class="t" style="left:734.67px;top:159.00px;height:12px;line-height:12px;font-size:9px;color:#1b1b2a;-webkit-text-stroke:0.2px #1b1b2a;transform:scaleX(0.9200);transform-origin:0 50%;">6</div>
<div class="t" style="left:771.42px;top:159.00px;height:12px;line-height:12px;font-size:9px;color:#1b1b2a;-webkit-text-stroke:0.2px #1b1b2a;transform:scaleX(0.9200);transform-origin:0 50%;">7</div>
<div class="t" style="left:808.17px;top:159.00px;height:12px;line-height:12px;font-size:9px;color:#1b1b2a;-webkit-text-stroke:0.2px #1b1b2a;transform:scaleX(0.9200);transform-origin:0 50%;">8</div>
<div class="t" style="left:844.92px;top:159.00px;height:12px;line-height:12px;font-size:9px;color:#1b1b2a;-webkit-text-stroke:0.2px #1b1b2a;transform:scaleX(0.9200);transform-origin:0 50%;">9</div>
<svg style="left:0;top:0" width="862" height="491" viewBox="0 0 862 491"><rect x="488.3" y="172.5" width="367.09999999999997" height="41.19999999999999" fill="#fff"/><line x1="488.30" y1="172.5" x2="488.30" y2="213.7" stroke="#000" stroke-width="1.05"/><line x1="493.55" y1="172.5" x2="493.55" y2="213.7" stroke="#000" stroke-width="1.05"/><line x1="498.80" y1="169" x2="498.80" y2="213.7" stroke="#000" stroke-width="1.05"/><line x1="504.05" y1="172.5" x2="504.05" y2="213.7" stroke="#000" stroke-width="1.05"/><line x1="509.30" y1="172.5" x2="509.30" y2="213.7" stroke="#000" stroke-width="1.05"/><line x1="514.55" y1="172.5" x2="514.55" y2="213.7" stroke="#000" stroke-width="1.05"/><line x1="519.80" y1="172.5" x2="519.80" y2="213.7" stroke="#000" stroke-width="1.05"/><line x1="525.05" y1="172.5" x2="525.05" y2="213.7" stroke="#aa9a10" stroke-width="1.05"/><line x1="530.30" y1="172.5" x2="530.30" y2="213.7" stroke="#aa9a10" stroke-width="1.05"/><line x1="535.55" y1="169" x2="535.55" y2="213.7" stroke="#aa9a10" stroke-width="1.05"/><line x1="540.80" y1="172.5" x2="540.80" y2="213.7" stroke="#aa9a10" stroke-width="1.05"/><line x1="546.05" y1="172.5" x2="546.05" y2="213.7" stroke="#aa9a10" stroke-width="1.05"/><line x1="551.30" y1="172.5" x2="551.30" y2="213.7" stroke="#aa9a10" stroke-width="1.05"/><line x1="556.55" y1="172.5" x2="556.55" y2="213.7" stroke="#aa9a10" stroke-width="1.05"/><line x1="561.80" y1="172.5" x2="561.80" y2="213.7" stroke="#1682d0" stroke-width="1.05"/><line x1="567.05" y1="172.5" x2="567.05" y2="213.7" stroke="#1682d0" stroke-width="1.05"/><line x1="572.30" y1="169" x2="572.30" y2="213.7" stroke="#aa9a10" stroke-width="1.05"/><line x1="577.55" y1="172.5" x2="577.55" y2="213.7" stroke="#1682d0" stroke-width="1.05"/><line x1="582.80" y1="172.5" x2="582.80" y2="213.7" stroke="#1682d0" stroke-width="1.05"/><line x1="588.05" y1="172.5" x2="588.05" y2="213.7" stroke="#1682d0" stroke-width="1.05"/><line x1="593.30" y1="172.5" x2="593.30" y2="213.7" stroke="#aa9a10" stroke-width="1.05"/><line x1="598.55" y1="172.5" x2="598.55" y2="213.7" stroke="#aa9a10" stroke-width="1.05"/><line x1="603.80" y1="172.5" x2="603.80" y2="213.7" stroke="#aa9a10" stroke-width="1.05"/><line x1="609.05" y1="169" x2="609.05" y2="213.7" stroke="#1682d0" stroke-width="1.05"/><line x1="614.30" y1="172.5" x2="614.30" y2="213.7" stroke="#1682d0" stroke-width="1.05"/><line x1="619.55" y1="172.5" x2="619.55" y2="213.7" stroke="#1682d0" stroke-width="1.05"/><line x1="624.80" y1="172.5" x2="624.80" y2="213.7" stroke="#aa9a10" stroke-width="1.05"/><line x1="630.05" y1="172.5" x2="630.05" y2="213.7" stroke="#aa9a10" stroke-width="1.05"/><line x1="635.30" y1="172.5" x2="635.30" y2="213.7" stroke="#aa9a10" stroke-width="1.05"/><line x1="640.55" y1="172.5" x2="640.55" y2="213.7" stroke="#1682d0" stroke-width="1.05"/><line x1="645.80" y1="169" x2="645.80" y2="213.7" stroke="#1682d0" stroke-width="1.05"/><line x1="651.05" y1="172.5" x2="651.05" y2="213.7" stroke="#1682d0" stroke-width="1.05"/><line x1="656.30" y1="172.5" x2="656.30" y2="213.7" stroke="#aa9a10" stroke-width="1.05"/><line x1="661.55" y1="172.5" x2="661.55" y2="213.7" stroke="#aa9a10" stroke-width="1.05"/><line x1="666.80" y1="172.5" x2="666.80" y2="213.7" stroke="#aa9a10" stroke-width="1.05"/><line x1="672.05" y1="172.5" x2="672.05" y2="213.7" stroke="#1682d0" stroke-width="1.05"/><line x1="677.30" y1="172.5" x2="677.30" y2="213.7" stroke="#1682d0" stroke-width="1.05"/><line x1="682.55" y1="169" x2="682.55" y2="213.7" stroke="#1682d0" stroke-width="1.05"/><line x1="687.80" y1="172.5" x2="687.80" y2="213.7" stroke="#aa9a10" stroke-width="1.05"/><line x1="693.05" y1="172.5" x2="693.05" y2="213.7" stroke="#aa9a10" stroke-width="1.05"/><line x1="698.30" y1="172.5" x2="698.30" y2="213.7" stroke="#aa9a10" stroke-width="1.05"/><line x1="703.55" y1="172.5" x2="703.55" y2="213.7" stroke="#1682d0" stroke-width="1.05"/><line x1="708.80" y1="172.5" x2="708.80" y2="213.7" stroke="#1682d0" stroke-width="1.05"/><line x1="714.05" y1="172.5" x2="714.05" y2="213.7" stroke="#aa9a10" stroke-width="1.05"/><line x1="719.30" y1="169" x2="719.30" y2="213.7" stroke="#1682d0" stroke-width="1.05"/><line x1="724.55" y1="172.5" x2="724.55" y2="213.7" stroke="#1682d0" stroke-width="1.05"/><line x1="729.80" y1="172.5" x2="729.80" y2="213.7" stroke="#aa9a10" stroke-width="1.05"/><line x1="735.05" y1="172.5" x2="735.05" y2="213.7" stroke="#aa9a10" stroke-width="1.05"/><line x1="740.30" y1="172.5" x2="740.30" y2="213.7" stroke="#aa9a10" stroke-width="1.05"/><line x1="745.55" y1="172.5" x2="745.55" y2="213.7" stroke="#1682d0" stroke-width="1.05"/><line x1="750.80" y1="172.5" x2="750.80" y2="213.7" stroke="#1682d0" stroke-width="1.05"/><line x1="756.05" y1="169" x2="756.05" y2="213.7" stroke="#1682d0" stroke-width="1.05"/><line x1="761.30" y1="172.5" x2="761.30" y2="213.7" stroke="#aa9a10" stroke-width="1.05"/><line x1="766.55" y1="172.5" x2="766.55" y2="213.7" stroke="#aa9a10" stroke-width="1.05"/><line x1="771.80" y1="172.5" x2="771.80" y2="213.7" stroke="#aa9a10" stroke-width="1.05"/><line x1="777.05" y1="172.5" x2="777.05" y2="213.7" stroke="#aa9a10" stroke-width="1.05"/><line x1="782.30" y1="172.5" x2="782.30" y2="213.7" stroke="#aa9a10" stroke-width="1.05"/><line x1="787.55" y1="172.5" x2="787.55" y2="213.7" stroke="#aa9a10" stroke-width="1.05"/><line x1="792.80" y1="169" x2="792.80" y2="213.7" stroke="#aa9a10" stroke-width="1.05"/><line x1="798.05" y1="172.5" x2="798.05" y2="213.7" stroke="#000" stroke-width="1.05"/><line x1="803.30" y1="172.5" x2="803.30" y2="213.7" stroke="#000" stroke-width="1.05"/><line x1="808.55" y1="172.5" x2="808.55" y2="213.7" stroke="#000" stroke-width="1.05"/><line x1="813.80" y1="172.5" x2="813.80" y2="213.7" stroke="#000" stroke-width="1.05"/><line x1="819.05" y1="172.5" x2="819.05" y2="213.7" stroke="#000" stroke-width="1.05"/><line x1="824.30" y1="172.5" x2="824.30" y2="213.7" stroke="#000" stroke-width="1.05"/><line x1="829.55" y1="169" x2="829.55" y2="213.7" stroke="#000" stroke-width="1.05"/><line x1="834.80" y1="172.5" x2="834.80" y2="213.7" stroke="#000" stroke-width="1.05"/><line x1="840.05" y1="172.5" x2="840.05" y2="213.7" stroke="#000" stroke-width="1.05"/><line x1="845.30" y1="172.5" x2="845.30" y2="213.7" stroke="#000" stroke-width="1.05"/><line x1="850.55" y1="172.5" x2="850.55" y2="213.7" stroke="#000" stroke-width="1.05"/><line x1="488" y1="213.1" x2="524.2" y2="213.1" stroke="#000" stroke-width="1.2"/><line x1="524.2" y1="213.1" x2="561.3" y2="213.1" stroke="#aa9a10" stroke-width="1.2"/><line x1="561.3" y1="213.1" x2="571.8" y2="213.1" stroke="#1682d0" stroke-width="1.2"/><line x1="571.8" y1="213.1" x2="577.1" y2="213.1" stroke="#aa9a10" stroke-width="1.2"/><line x1="577.1" y1="213.1" x2="592.7" y2="213.1" stroke="#1682d0" stroke-width="1.2"/><line x1="592.7" y1="213.1" x2="608.4" y2="213.1" stroke="#aa9a10" stroke-width="1.2"/><line x1="608.4" y1="213.1" x2="624.1" y2="213.1" stroke="#1682d0" stroke-width="1.2"/><line x1="624.1" y1="213.1" x2="640.2" y2="213.1" stroke="#aa9a10" stroke-width="1.2"/><line x1="640.2" y1="213.1" x2="655.9" y2="213.1" stroke="#1682d0" stroke-width="1.2"/><line x1="655.9" y1="213.1" x2="671.8" y2="213.1" stroke="#aa9a10" stroke-width="1.2"/><line x1="671.8" y1="213.1" x2="687.2" y2="213.1" stroke="#1682d0" stroke-width="1.2"/><line x1="687.2" y1="213.1" x2="703" y2="213.1" stroke="#aa9a10" stroke-width="1.2"/><line x1="703" y1="213.1" x2="713.7" y2="213.1" stroke="#1682d0" stroke-width="1.2"/><line x1="713.7" y1="213.1" x2="719.2" y2="213.1" stroke="#aa9a10" stroke-width="1.2"/><line x1="719.2" y1="213.1" x2="729.4" y2="213.1" stroke="#1682d0" stroke-width="1.2"/><line x1="729.4" y1="213.1" x2="745.2" y2="213.1" stroke="#aa9a10" stroke-width="1.2"/><line x1="745.2" y1="213.1" x2="761" y2="213.1" stroke="#1682d0" stroke-width="1.2"/><line x1="761" y1="213.1" x2="797.4" y2="213.1" stroke="#aa9a10" stroke-width="1.2"/><line x1="797.4" y1="213.1" x2="856" y2="213.1" stroke="#000" stroke-width="1.2"/><rect x="491.70" y="172.5" width="3.2" height="23.5" fill="#000" stroke="#000" stroke-width="0.6"/><rect x="502.25" y="172.5" width="3.2" height="23.5" fill="#000" stroke="#000" stroke-width="0.6"/><rect x="507.45" y="172.5" width="3.2" height="23.5" fill="#000" stroke="#000" stroke-width="0.6"/><rect x="518.15" y="172.5" width="3.2" height="23.5" fill="#000" stroke="#000" stroke-width="0.6"/><rect x="523.25" y="172.5" width="3.2" height="23.5" fill="#000" stroke="#aa9a10" stroke-width="0.6"/><rect x="528.45" y="172.5" width="3.2" height="23.5" fill="#000" stroke="#aa9a10" stroke-width="0.6"/><rect x="539.00" y="172.5" width="3.2" height="23.5" fill="#000" stroke="#aa9a10" stroke-width="0.6"/><rect x="544.20" y="172.5" width="3.2" height="23.5" fill="#000" stroke="#aa9a10" stroke-width="0.6"/><rect x="554.90" y="172.5" width="3.2" height="23.5" fill="#000" stroke="#aa9a10" stroke-width="0.6"/><rect x="560.00" y="172.5" width="3.2" height="23.5" fill="#000" stroke="#1682d0" stroke-width="0.6"/><rect x="565.20" y="172.5" width="3.2" height="23.5" fill="#000" stroke="#1682d0" stroke-width="0.6"/><rect x="575.75" y="172.5" width="3.2" height="23.5" fill="#000" stroke="#1682d0" stroke-width="0.6"/><rect x="580.95" y="172.5" width="3.2" height="23.5" fill="#000" stroke="#1682d0" stroke-width="0.6"/><rect x="591.65" y="172.5" width="3.2" height="23.5" fill="#000" stroke="#aa9a10" stroke-width="0.6"/><rect x="596.75" y="172.5" width="3.2" height="23.5" fill="#000" stroke="#aa9a10" stroke-width="0.6"/><rect x="601.95" y="172.5" width="3.2" height="23.5" fill="#000" stroke="#aa9a10" stroke-width="0.6"/><rect x="612.50" y="172.5" width="3.2" height="23.5" fill="#000" stroke="#1682d0" stroke-width="0.6"/><rect x="617.70" y="172.5" width="3.2" height="23.5" fill="#000" stroke="#1682d0" stroke-width="0.6"/><rect x="628.40" y="172.5" width="3.2" height="23.5" fill="#000" stroke="#aa9a10" stroke-width="0.6"/><rect x="633.50" y="172.5" width="3.2" height="23.5" fill="#000" stroke="#aa9a10" stroke-width="0.6"/><rect x="638.70" y="172.5" width="3.2" height="23.5" fill="#000" stroke="#1682d0" stroke-width="0.6"/><rect x="649.25" y="172.5" width="3.2" height="23.5" fill="#000" stroke="#1682d0" stroke-width="0.6"/><rect x="654.45" y="172.5" width="3.2" height="23.5" fill="#000" stroke="#aa9a10" stroke-width="0.6"/><rect x="665.15" y="172.5" width="3.2" height="23.5" fill="#000" stroke="#aa9a10" stroke-width="0.6"/><rect x="670.25" y="172.5" width="3.2" height="23.5" fill="#000" stroke="#1682d0" stroke-width="0.6"/><rect x="675.45" y="172.5" width="3.2" height="23.5" fill="#000" stroke="#1682d0" stroke-width="0.6"/><rect x="686.00" y="172.5" width="3.2" height="23.5" fill="#000" stroke="#aa9a10" stroke-width="0.6"/><rect x="691.20" y="172.5" width="3.2" height="23.5" fill="#000" stroke="#aa9a10" stroke-width="0.6"/><rect x="701.90" y="172.5" width="3.2" height="23.5" fill="#000" stroke="#1682d0" stroke-width="0.6"/><rect x="707.00" y="172.5" width="3.2" height="23.5" fill="#000" stroke="#1682d0" stroke-width="0.6"/><rect x="712.20" y="172.5" width="3.2" height="23.5" fill="#000" stroke="#aa9a10" stroke-width="0.6"/><rect x="722.75" y="172.5" width="3.2" height="23.5" fill="#000" stroke="#1682d0" stroke-width="0.6"/><rect x="727.95" y="172.5" width="3.2" height="23.5" fill="#000" stroke="#aa9a10" stroke-width="0.6"/><rect x="738.65" y="172.5" width="3.2" height="23.5" fill="#000" stroke="#aa9a10" stroke-width="0.6"/><rect x="743.75" y="172.5" width="3.2" height="23.5" fill="#000" stroke="#1682d0" stroke-width="0.6"/><rect x="748.95" y="172.5" width="3.2" height="23.5" fill="#000" stroke="#1682d0" stroke-width="0.6"/><rect x="759.50" y="172.5" width="3.2" height="23.5" fill="#000" stroke="#aa9a10" stroke-width="0.6"/><rect x="764.70" y="172.5" width="3.2" height="23.5" fill="#000" stroke="#aa9a10" stroke-width="0.6"/><rect x="775.40" y="172.5" width="3.2" height="23.5" fill="#000" stroke="#aa9a10" stroke-width="0.6"/><rect x="780.50" y="172.5" width="3.2" height="23.5" fill="#000" stroke="#aa9a10" stroke-width="0.6"/><rect x="785.70" y="172.5" width="3.2" height="23.5" fill="#000" stroke="#aa9a10" stroke-width="0.6"/><rect x="796.25" y="172.5" width="3.2" height="23.5" fill="#000" stroke="#000" stroke-width="0.6"/><rect x="801.45" y="172.5" width="3.2" height="23.5" fill="#000" stroke="#000" stroke-width="0.6"/><rect x="812.15" y="172.5" width="3.2" height="23.5" fill="#000" stroke="#000" stroke-width="0.6"/><rect x="817.25" y="172.5" width="3.2" height="23.5" fill="#000" stroke="#000" stroke-width="0.6"/><rect x="822.45" y="172.5" width="3.2" height="23.5" fill="#000" stroke="#000" stroke-width="0.6"/><rect x="833.00" y="172.5" width="3.2" height="23.5" fill="#000" stroke="#000" stroke-width="0.6"/><rect x="838.20" y="172.5" width="3.2" height="23.5" fill="#000" stroke="#000" stroke-width="0.6"/><rect x="848.90" y="172.5" width="3.2" height="23.5" fill="#000" stroke="#000" stroke-width="0.6"/><line x1="855.4" y1="173.0" x2="855.4" y2="213.7" stroke="#000" stroke-width="0.9"/></svg>
<div class="t" style="left:490.40px;top:218.00px;height:12px;line-height:12px;font-size:9px;color:#6a6a6a;-webkit-text-stroke:0.1px #6a6a6a;transform:scaleX(0.9085);transform-origin:0 50%;">Double-click to edit region, drag to create new, Ctrl unsticks edges.</div>
<div class="a" style="left:780px;top:224.5px;width:2.5px;height:1.2px;background:#2a8a2a"></div>
<div class="a" style="left:831.2px;top:217.9px;width:12.299999999999955px;height:10.6px;background:#fdfdfd;border:1px solid #d0d0d0;border-radius:2px"></div>
<div class="t" style="left:835.97px;top:217.20px;height:12px;line-height:12px;font-size:9px;color:#333;-webkit-text-stroke:0.2px #333;transform:scaleX(0.9200);transform-origin:0 50%;">-</div>
<div class="a" style="left:845.9px;top:217.9px;width:11.700000000000045px;height:10.6px;background:#fdfdfd;border:1px solid #d0d0d0;border-radius:2px"></div>
<div class="t" style="left:849.33px;top:217.20px;height:12px;line-height:12px;font-size:9px;color:#333;-webkit-text-stroke:0.2px #333;transform:scaleX(0.9200);transform-origin:0 50%;">+</div>
<div class="a" style="left:480.2px;top:232.6px;width:380.3px;height:240.6px;background:#fff"></div>
<div class="a" style="left:480.2px;top:263.0px;width:380.3px;height:1px;background:#dedede"></div>
<div class="a" style="left:480.2px;top:293.2px;width:380.3px;height:1px;background:#dedede"></div>
<div class="a" style="left:480.2px;top:322.9px;width:380.3px;height:1px;background:#dedede"></div>
<div class="a" style="left:480.2px;top:352.3px;width:380.3px;height:1px;background:#dedede"></div>
<div class="a" style="left:480.2px;top:382.0px;width:380.3px;height:1px;background:#dedede"></div>
<div class="a" style="left:480.2px;top:412.1px;width:380.3px;height:1px;background:#dedede"></div>
<div class="a" style="left:480.2px;top:442.0px;width:380.3px;height:1px;background:#dedede"></div>
<div class="a" style="left:515.1px;top:232.6px;width:1px;height:240.6px;background:#dedede"></div>
<div class="a" style="left:839.5px;top:232.6px;width:1px;height:240.6px;background:#dedede"></div>
<div class="a" style="left:542.1px;top:233.1px;width:266px;height:239.2px;background:#c8c8c8;border:1.4px solid #7a7a7a;border-top:1px solid #141414"></div>
<div class="a" style="left:542.1px;top:351.6px;width:266px;height:1.4px;background:#333"></div>
<div class="a" style="left:577.8px;top:234px;width:1.4px;height:237px;background:#666"></div>
<div class="a" style="left:586.5999999999999px;top:234px;width:1.4px;height:237px;background:#666"></div>
<div class="a" style="left:592.5px;top:234px;width:1.4px;height:237px;background:#666"></div>
<div class="a" style="left:607.6999999999999px;top:234px;width:1.4px;height:237px;background:#666"></div>
<div class="a" style="left:622.9px;top:234px;width:1.4px;height:237px;background:#666"></div>
<div class="a" style="left:638.0999999999999px;top:234px;width:1.4px;height:237px;background:#666"></div>
<div class="a" style="left:653.1999999999999px;top:234px;width:1.4px;height:237px;background:#666"></div>
<div class="a" style="left:668.4px;top:234px;width:1.4px;height:237px;background:#666"></div>
<div class="a" style="left:683.1999999999999px;top:234px;width:1.4px;height:237px;background:#666"></div>
<div class="a" style="left:698.3px;top:234px;width:1.4px;height:237px;background:#666"></div>
<div class="a" style="left:713.4px;top:234px;width:1.4px;height:237px;background:#666"></div>
<div class="a" style="left:728.0px;top:234px;width:1.4px;height:237px;background:#666"></div>
<div class="a" style="left:730.1999999999999px;top:234px;width:1.4px;height:237px;background:#666"></div>
<div class="a" style="left:743.0999999999999px;top:234px;width:1.4px;height:237px;background:#666"></div>
<div class="a" style="left:758.1999999999999px;top:234px;width:1.4px;height:237px;background:#666"></div>
<div class="a" style="left:770.5999999999999px;top:234px;width:1.4px;height:237px;background:#666"></div>
<div class="t" style="left:553.03px;top:286.50px;height:12px;line-height:12px;font-size:9px;color:#1b1b2a;-webkit-text-stroke:0.1px #1b1b2a;transform:scaleX(0.9500);transform-origin:0 50%;">F#0</div>
<div class="t" style="left:595.57px;top:286.50px;height:12px;line-height:12px;font-size:9px;color:#1b1b2a;-webkit-text-stroke:0.1px #1b1b2a;transform:scaleX(0.9500);transform-origin:0 50%;">E1</div>
<div class="t" style="left:610.77px;top:286.50px;height:12px;line-height:12px;font-size:9px;color:#1b1b2a;-webkit-text-stroke:0.1px #1b1b2a;transform:scaleX(0.9500);transform-origin:0 50%;">A1</div>
<div class="t" style="left:625.73px;top:286.50px;height:12px;line-height:12px;font-size:9px;color:#1b1b2a;-webkit-text-stroke:0.1px #1b1b2a;transform:scaleX(0.9500);transform-origin:0 50%;">D2</div>
<div class="t" style="left:640.59px;top:286.50px;height:12px;line-height:12px;font-size:9px;color:#1b1b2a;-webkit-text-stroke:0.1px #1b1b2a;transform:scaleX(0.9500);transform-origin:0 50%;">G2</div>
<div class="t" style="left:655.93px;top:286.50px;height:12px;line-height:12px;font-size:9px;color:#1b1b2a;-webkit-text-stroke:0.1px #1b1b2a;transform:scaleX(0.9500);transform-origin:0 50%;">C3</div>
<div class="t" style="left:671.51px;top:286.50px;height:12px;line-height:12px;font-size:9px;color:#1b1b2a;-webkit-text-stroke:0.1px #1b1b2a;transform:scaleX(0.9500);transform-origin:0 50%;">F3</div>
<div class="t" style="left:683.79px;top:286.50px;height:12px;line-height:12px;font-size:9px;color:#1b1b2a;-webkit-text-stroke:0.1px #1b1b2a;transform:scaleX(0.9500);transform-origin:0 50%;">A#3</div>
<div class="t" style="left:698.66px;top:286.50px;height:12px;line-height:12px;font-size:9px;color:#1b1b2a;-webkit-text-stroke:0.1px #1b1b2a;transform:scaleX(0.9500);transform-origin:0 50%;">D#4</div>
<div class="t" style="left:713.32px;top:286.50px;height:12px;line-height:12px;font-size:9px;color:#1b1b2a;-webkit-text-stroke:0.1px #1b1b2a;transform:scaleX(0.9500);transform-origin:0 50%;">G#4</div>
<div class="t" style="left:730.34px;top:286.50px;height:12px;line-height:12px;font-size:9px;color:#1b1b2a;-webkit-text-stroke:0.1px #1b1b2a;transform:scaleX(0.9500);transform-origin:0 50%;">C...</div>
<div class="t" style="left:743.93px;top:286.50px;height:12px;line-height:12px;font-size:9px;color:#1b1b2a;-webkit-text-stroke:0.1px #1b1b2a;transform:scaleX(0.9500);transform-origin:0 50%;">F#5</div>
<div class="t" style="left:759.77px;top:286.50px;height:12px;line-height:12px;font-size:9px;color:#1b1b2a;-webkit-text-stroke:0.1px #1b1b2a;transform:scaleX(0.9500);transform-origin:0 50%;">B5</div>
<div class="t" style="left:783.77px;top:286.50px;height:12px;line-height:12px;font-size:9px;color:#1b1b2a;-webkit-text-stroke:0.1px #1b1b2a;transform:scaleX(0.9500);transform-origin:0 50%;">B5</div>
<div class="t" style="left:553.03px;top:406.80px;height:12px;line-height:12px;font-size:9px;color:#1b1b2a;-webkit-text-stroke:0.1px #1b1b2a;transform:scaleX(0.9500);transform-origin:0 50%;">F#0</div>
<div class="t" style="left:595.57px;top:406.80px;height:12px;line-height:12px;font-size:9px;color:#1b1b2a;-webkit-text-stroke:0.1px #1b1b2a;transform:scaleX(0.9500);transform-origin:0 50%;">E1</div>
<div class="t" style="left:610.77px;top:406.80px;height:12px;line-height:12px;font-size:9px;color:#1b1b2a;-webkit-text-stroke:0.1px #1b1b2a;transform:scaleX(0.9500);transform-origin:0 50%;">A1</div>
<div class="t" style="left:625.73px;top:406.80px;height:12px;line-height:12px;font-size:9px;color:#1b1b2a;-webkit-text-stroke:0.1px #1b1b2a;transform:scaleX(0.9500);transform-origin:0 50%;">D2</div>
<div class="t" style="left:640.59px;top:406.80px;height:12px;line-height:12px;font-size:9px;color:#1b1b2a;-webkit-text-stroke:0.1px #1b1b2a;transform:scaleX(0.9500);transform-origin:0 50%;">G2</div>
<div class="t" style="left:655.93px;top:406.80px;height:12px;line-height:12px;font-size:9px;color:#1b1b2a;-webkit-text-stroke:0.1px #1b1b2a;transform:scaleX(0.9500);transform-origin:0 50%;">C3</div>
<div class="t" style="left:671.51px;top:406.80px;height:12px;line-height:12px;font-size:9px;color:#1b1b2a;-webkit-text-stroke:0.1px #1b1b2a;transform:scaleX(0.9500);transform-origin:0 50%;">F3</div>
<div class="t" style="left:683.79px;top:406.80px;height:12px;line-height:12px;font-size:9px;color:#1b1b2a;-webkit-text-stroke:0.1px #1b1b2a;transform:scaleX(0.9500);transform-origin:0 50%;">A#3</div>
<div class="t" style="left:698.66px;top:406.80px;height:12px;line-height:12px;font-size:9px;color:#1b1b2a;-webkit-text-stroke:0.1px #1b1b2a;transform:scaleX(0.9500);transform-origin:0 50%;">D#4</div>
<div class="t" style="left:713.32px;top:406.80px;height:12px;line-height:12px;font-size:9px;color:#1b1b2a;-webkit-text-stroke:0.1px #1b1b2a;transform:scaleX(0.9500);transform-origin:0 50%;">G#4</div>
<div class="t" style="left:730.34px;top:406.80px;height:12px;line-height:12px;font-size:9px;color:#1b1b2a;-webkit-text-stroke:0.1px #1b1b2a;transform:scaleX(0.9500);transform-origin:0 50%;">C...</div>
<div class="t" style="left:743.93px;top:406.80px;height:12px;line-height:12px;font-size:9px;color:#1b1b2a;-webkit-text-stroke:0.1px #1b1b2a;transform:scaleX(0.9500);transform-origin:0 50%;">F#5</div>
<div class="t" style="left:759.77px;top:406.80px;height:12px;line-height:12px;font-size:9px;color:#1b1b2a;-webkit-text-stroke:0.1px #1b1b2a;transform:scaleX(0.9500);transform-origin:0 50%;">B5</div>
<div class="t" style="left:783.77px;top:406.80px;height:12px;line-height:12px;font-size:9px;color:#1b1b2a;-webkit-text-stroke:0.1px #1b1b2a;transform:scaleX(0.9500);transform-origin:0 50%;">B5</div>
<div class="a" style="left:1px;top:473px;width:860px;height:16.4px;background:#f0f0f0;border-top:1px solid #dcdcdc"></div>
<div class="a" style="left:542px;top:474px;width:1px;height:15px;background:#d8d8d8"></div>
<div class="a" style="left:8.3px;top:480.3px;width:3px;height:3px;border-radius:50%;background:#7a7a7a"></div>
<div class="t" style="left:17.60px;top:475.80px;height:12px;line-height:12px;font-size:9px;color:#1b1b2a;-webkit-text-stroke:0.2px #1b1b2a;transform:scaleX(0.9622);transform-origin:0 50%;">Layer with 34 regions, key range: A0..C8, velocity range: 0..127</div>
</body></html>
